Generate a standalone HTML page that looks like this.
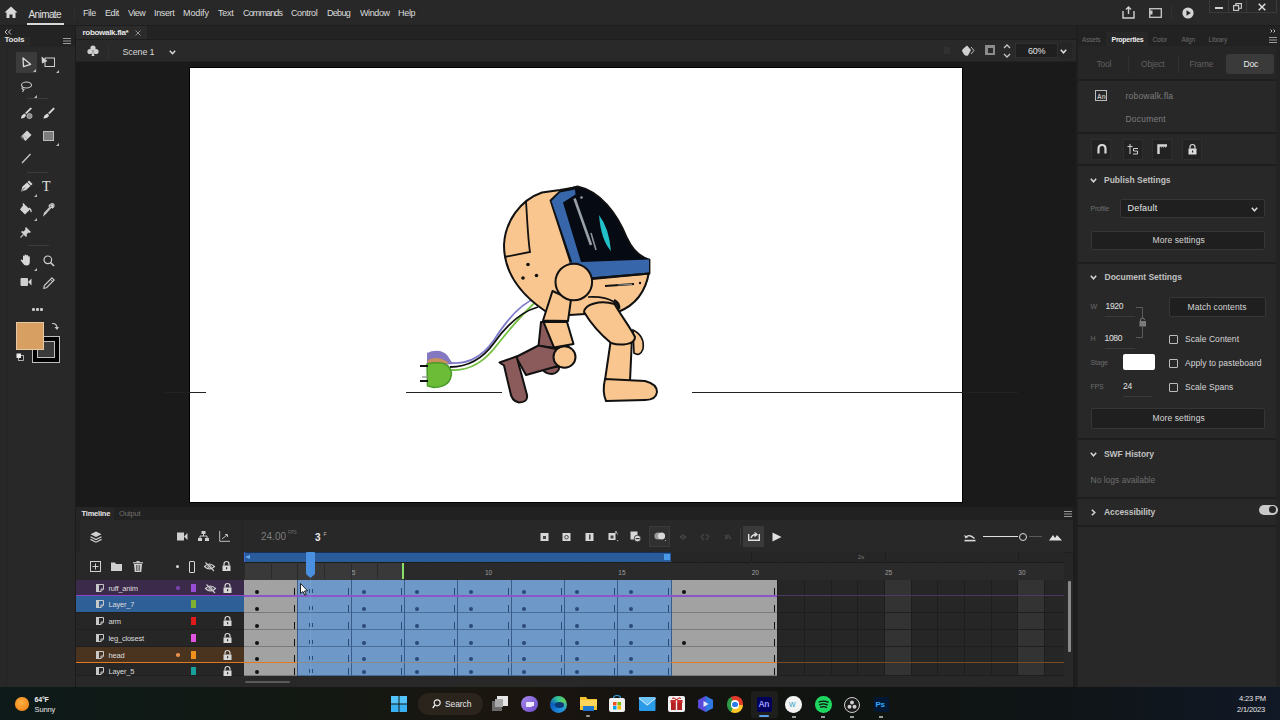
<!DOCTYPE html>
<html><head><meta charset="utf-8">
<style>
*{box-sizing:border-box;margin:0;padding:0}
html,body{width:1280px;height:720px;overflow:hidden;background:#1d1d1d;font-family:"Liberation Sans",sans-serif;color:#cfcfcf}
.a{position:absolute}
.t{position:absolute;white-space:nowrap;line-height:1}
svg{position:absolute;overflow:visible}
#menubar{left:0;top:0;width:1280px;height:26px;background:#282828}
.mm{top:8.7px;font-size:9px;color:#dcdcdc}
#tools{left:0;top:26px;width:76px;height:661px;background:#282828}
#tabrow{left:76px;top:26px;width:1000px;height:13px;background:#232323}
#scenebar{left:76px;top:39px;width:1000px;height:23px;background:#292929}
#paste{left:76px;top:62px;width:1000px;height:443px;background:#1a1a1a;overflow:hidden}
#stage{left:112.5px;top:5px;width:774.5px;height:436px;background:#fff;border:1px solid #000}
#timeline{left:76px;top:505px;width:1000px;height:182px;background:#262626;overflow:hidden}
#props{left:1076px;top:26px;width:204px;height:661px;background:#282828}
#taskbar{left:0;top:687px;width:1280px;height:33px;background:#111a1c}
</style></head><body>
<!-- MENUBAR -->
<div id="menubar" class="a">
  <div class="a" style="left:0;top:25px;width:1280px;height:1px;background:#1d1d1d"></div>
  <svg class="a" style="left:4px;top:6px" width="14" height="13" viewBox="0 0 14 13"><path d="M7 0.5 L13.5 6.5 L11.5 6.5 L11.5 12 L8.5 12 L8.5 8.5 L5.5 8.5 L5.5 12 L2.5 12 L2.5 6.5 L0.5 6.5 Z" fill="#d8d8d8"/></svg>
  <div class="t" style="left:28.5px;top:9.5px;font-size:10px;color:#e0e0e0;letter-spacing:-0.6px">Animate</div>
  <div class="a" style="left:27px;top:23px;width:37px;height:2px;background:#d8d8d8"></div>
  <div class="a" style="left:74px;top:6px;width:1px;height:14px;background:#2f2f2f"></div>
  <div class="t mm" style="left:83px;letter-spacing:-0.44px">File</div>
  <div class="t mm" style="left:105px;letter-spacing:-0.41px">Edit</div>
  <div class="t mm" style="left:128px;letter-spacing:-0.52px">View</div>
  <div class="t mm" style="left:154px;letter-spacing:-0.36px">Insert</div>
  <div class="t mm" style="left:183px;letter-spacing:-0.1px">Modify</div>
  <div class="t mm" style="left:218px;letter-spacing:-0.27px">Text</div>
  <div class="t mm" style="left:243px;letter-spacing:-0.87px">Commands</div>
  <div class="t mm" style="left:291px;letter-spacing:-0.39px">Control</div>
  <div class="t mm" style="left:327px;letter-spacing:-0.71px">Debug</div>
  <div class="t mm" style="left:360px;letter-spacing:-0.4px">Window</div>
  <div class="t mm" style="left:398px;letter-spacing:-0.31px">Help</div>
  <div class="a" style="left:422px;top:6px;width:1px;height:14px;background:#2c2c2c"></div>
  <!-- share -->
  <svg class="a" style="left:1122px;top:6px" width="13" height="13" viewBox="0 0 13 13"><path d="M1 5 V12 H12 V5" fill="none" stroke="#d0d0d0" stroke-width="1.4"/><path d="M6.5 1 V8 M4 3.5 L6.5 1 L9 3.5" fill="none" stroke="#d0d0d0" stroke-width="1.4"/></svg>
  <svg class="a" style="left:1149px;top:8px" width="13" height="10" viewBox="0 0 13 10"><rect x="0.7" y="0.7" width="11.6" height="8.6" fill="none" stroke="#c8c8c8" stroke-width="1.3"/><rect x="1" y="2.5" width="2.5" height="4" fill="#c8c8c8"/></svg>
  <div class="a" style="left:1171px;top:5px;width:1px;height:16px;background:#303030"></div>
  <svg class="a" style="left:1182px;top:7px" width="12" height="12" viewBox="0 0 12 12"><circle cx="6" cy="6" r="5.6" fill="#d4d4d4"/><path d="M4.5 3.2 L8.8 6 L4.5 8.8Z" fill="#262626"/></svg>
  <div class="a" style="left:1209px;top:-1px;width:68px;height:14px;border:1px solid #3a3a3a"></div>
  <div class="a" style="left:1228px;top:0;width:1px;height:12px;background:#3a3a3a"></div>
  <div class="a" style="left:1246px;top:0;width:1px;height:12px;background:#3a3a3a"></div>
  <div class="a" style="left:1215px;top:7px;width:8px;height:2px;background:#d0d0d0"></div>
  <svg class="a" style="left:1232.5px;top:3px" width="9" height="8" viewBox="0 0 9 8"><rect x="0.6" y="2.6" width="5" height="4.8" fill="none" stroke="#d0d0d0" stroke-width="1.1"/><path d="M2.8 2.6 V0.6 H8.4 V5.2 H5.6" fill="none" stroke="#d0d0d0" stroke-width="1.1"/></svg>
  <svg class="a" style="left:1258px;top:2.5px" width="8" height="8" viewBox="0 0 8 8"><path d="M0.7 0.7 L7.3 7.3 M7.3 0.7 L0.7 7.3" stroke="#e0e0e0" stroke-width="1.4"/></svg>
</div>
<div id="tools" class="a">
  <div class="a" style="left:0;top:0;width:76px;height:11px;background:#232323"></div>
  <svg style="left:4px;top:3px" width="8" height="6" viewBox="0 0 8 6"><path d="M3.5 0.5 L1 3 L3.5 5.5 M7 0.5 L4.5 3 L7 5.5" fill="none" stroke="#c8c8c8" stroke-width="1"/></svg>
  <div class="t" style="left:4.5px;top:10px;font-size:8px;font-weight:bold;color:#e0e0e0;letter-spacing:-0.2px">Tools</div>
  <div class="a" style="left:30px;top:9px;width:45px;height:11px;background:#232323"></div>
  <svg style="left:63px;top:12px" width="8" height="6" viewBox="0 0 8 6"><path d="M0 0.5 H8 M0 3 H8 M0 5.5 H8" stroke="#9a9a9a" stroke-width="1"/></svg>
  <div class="a" style="left:0;top:20px;width:76px;height:1px;background:#242424"></div>
  <div class="a" style="left:6px;top:21px;width:1px;height:640px;background:#232323"></div>
  <div class="a" style="left:74.5px;top:0;width:1.5px;height:661px;background:#1c1c1c"></div>
  <!-- selected box -->
  <div class="a" style="left:16px;top:26px;width:21px;height:21px;background:#3b3b3b;border-radius:1px"></div>
  <!-- select arrow -->
  <svg style="left:22px;top:31px" width="10" height="11" viewBox="0 0 10 11"><path d="M1 1 L8.6 7.3 L1.5 9.7 Z" fill="none" stroke="#dcdcdc" stroke-width="1.3" stroke-linejoin="round"/></svg>
  <svg style="left:32.5px;top:42.5px" width="3" height="3" viewBox="0 0 3 3"><path d="M3 0 V3 H0Z" fill="#bbb"/></svg>
  <!-- subselect -->
  <svg style="left:41px;top:30px" width="15" height="12" viewBox="0 0 15 12"><path d="M0.5 0.5 L6.5 5 L1 7.5 Z" fill="#d0d0d0"/><rect x="4" y="2" width="9.5" height="8.5" fill="none" stroke="#d0d0d0" stroke-width="1" /></svg>
  <svg style="left:55.5px;top:43.5px" width="3" height="3" viewBox="0 0 3 3"><path d="M3 0 V3 H0Z" fill="#bbb"/></svg>
  <!-- lasso -->
  <svg style="left:19px;top:55px" width="14" height="12" viewBox="0 0 14 12"><ellipse cx="7.5" cy="4" rx="5" ry="3" fill="none" stroke="#c8c8c8" stroke-width="1.1"/><path d="M3.5 6 Q2 8 5 8.5 Q4 10 3.5 11" fill="none" stroke="#c8c8c8" stroke-width="1.1"/></svg>
  <svg style="left:33.5px;top:68.5px" width="3" height="3" viewBox="0 0 3 3"><path d="M3 0 V3 H0Z" fill="#bbb"/></svg>
  <div class="a" style="left:27px;top:72px;width:21px;height:1px;background:#3c3c3c"></div>
  <!-- brush 1 -->
  <svg style="left:20px;top:81px" width="13" height="12" viewBox="0 0 13 12"><path d="M10.5 0.5 L12 1.5 L6.5 7 L5 6 Z" fill="#d8d8d8"/><path d="M1 11.5 Q1 8 4.5 6.5 L6 8 Q5 11.5 1 11.5Z" fill="#d8d8d8"/><circle cx="9.5" cy="9" r="2.6" fill="#8a8a8a" stroke="#b8b8b8" stroke-width="0.8"/></svg>
  <!-- brush 2 -->
  <svg style="left:43px;top:81px" width="12" height="12" viewBox="0 0 12 12"><path d="M10.5 0.5 L11.8 1.8 L6.5 7.2 L5 6 Z" fill="#d8d8d8"/><path d="M0.5 11.5 Q0.5 8 4.5 6.5 L6 8.2 Q5 11.5 0.5 11.5Z" fill="#d8d8d8"/></svg>
  <!-- eraser -->
  <svg style="left:20px;top:104px" width="12" height="12" viewBox="0 0 12 12"><path d="M7 0.5 L11.5 5 L5.5 11 L1 6.5 Z" fill="#d4d4d4"/><path d="M1 6.5 L3.5 9 " stroke="#6a6a6a" stroke-width="2"/><path d="M3 4.5 L7.5 9" stroke="#9a9a9a" stroke-width="0.7"/></svg>
  <!-- rectangle -->
  <div class="a" style="left:43px;top:105px;width:11px;height:10px;background:#7c7c7c;border:1px solid #bdbdbd"></div>
  <svg style="left:55.5px;top:116.5px" width="3" height="3" viewBox="0 0 3 3"><path d="M3 0 V3 H0Z" fill="#bbb"/></svg>
  <!-- line -->
  <svg style="left:21px;top:127px" width="10" height="11" viewBox="0 0 10 11"><path d="M1 10 L9.5 1" stroke="#c4c4c4" stroke-width="1.4"/></svg>
  <div class="a" style="left:27px;top:146px;width:21px;height:1px;background:#3c3c3c"></div>
  <!-- pen -->
  <svg style="left:20px;top:154px" width="13" height="12" viewBox="0 0 13 12"><path d="M9 0.5 L12.5 4 L11 5.5 L7.5 2 Z" fill="#d8d8d8"/><path d="M7 2.5 L10.5 6 L6 10 L1 11.5 L2.5 6.5 Z" fill="#d8d8d8"/><path d="M1.5 11 L5 7.5" stroke="#282828" stroke-width="0.8"/></svg>
  <svg style="left:33.5px;top:167.5px" width="3" height="3" viewBox="0 0 3 3"><path d="M3 0 V3 H0Z" fill="#bbb"/></svg>
  <!-- text T -->
  <div class="t" style="left:42px;top:154px;font-family:'Liberation Serif',serif;font-size:14px;color:#e0e0e0">T</div>
  <!-- paint bucket -->
  <svg style="left:19px;top:177px" width="14" height="13" viewBox="0 0 14 13"><path d="M5 1 L11 6.5 L6 11.5 L1 6.5 Z" fill="#d4d4d4"/><path d="M10 5 Q12.5 6.5 12 9" fill="none" stroke="#cfcfcf" stroke-width="1.3"/><path d="M4 0.5 L5 2" stroke="#d4d4d4" stroke-width="1.5"/></svg>
  <svg style="left:33.5px;top:191.5px" width="3" height="3" viewBox="0 0 3 3"><path d="M3 0 V3 H0Z" fill="#bbb"/></svg>
  <!-- eyedropper -->
  <svg style="left:43px;top:177px" width="12" height="13" viewBox="0 0 12 13"><path d="M8 1 Q10.5 0 11 2 Q11.5 4 9.5 5 L8.5 4 L3 10 L1 12 L1.5 10 L7 4 L6 3 Q7 1 8 1Z" fill="none" stroke="#d0d0d0" stroke-width="1.1"/><path d="M8 1.5 Q10 1 10.6 2.2 Q11 4 9.5 4.6 L7 2.5Z" fill="#d0d0d0"/></svg>
  <!-- pin -->
  <svg style="left:20px;top:200px" width="12" height="12" viewBox="0 0 12 12"><path d="M6 1 L11 6 L9.5 7 L8.5 6.5 L6.5 8.5 L7 10 L6 11 L1 6 L2 5 L3.5 5.5 L5.5 3.5 L5 2.5 Z" fill="#d0d0d0"/><path d="M3.5 8.5 L0.5 11.5" stroke="#bbb" stroke-width="1.2"/></svg>
  <div class="a" style="left:28px;top:219px;width:21px;height:1px;background:#3c3c3c"></div>
  <!-- hand -->
  <svg style="left:20px;top:228px" width="12" height="12" viewBox="0 0 12 12"><path d="M3 6 V2.5 Q3 1.5 3.8 1.5 Q4.6 1.5 4.6 2.5 V1.5 Q4.6 0.5 5.5 0.5 Q6.4 0.5 6.4 1.5 V2 Q6.4 1 7.3 1 Q8.2 1 8.2 2 V3 Q8.2 2.2 9 2.2 Q9.8 2.2 9.8 3 V8 Q9.8 11.5 6.5 11.5 Q4 11.5 3 9.5 L0.8 6.5 Q0.5 5.5 1.5 5.5 Q2.2 5.5 3 6.5Z" fill="#d8d8d8"/></svg>
  <svg style="left:33.5px;top:241.5px" width="3" height="3" viewBox="0 0 3 3"><path d="M3 0 V3 H0Z" fill="#bbb"/></svg>
  <!-- zoom -->
  <svg style="left:43px;top:229px" width="12" height="12" viewBox="0 0 12 12"><circle cx="4.8" cy="4.8" r="3.8" fill="none" stroke="#d0d0d0" stroke-width="1.2"/><path d="M7.5 7.5 L11 11" stroke="#d0d0d0" stroke-width="1.6"/></svg>
  <!-- camera -->
  <svg style="left:20px;top:251px" width="12" height="10" viewBox="0 0 12 10"><rect x="0.5" y="1" width="7.5" height="8" rx="1" fill="#d0d0d0"/><path d="M8 5 L11.5 1.5 V8.5 Z" fill="#d0d0d0"/></svg>
  <!-- pencil -->
  <svg style="left:43px;top:251px" width="12" height="12" viewBox="0 0 12 12"><path d="M9 0.8 L11.2 3 L3.5 10.7 L0.8 11.2 L1.3 8.5 Z" fill="none" stroke="#d0d0d0" stroke-width="1.1"/><path d="M7.5 2.3 L9.7 4.5" stroke="#d0d0d0" stroke-width="1"/></svg>
  <!-- dots -->
  <div class="a" style="left:32px;top:282px;width:3px;height:3px;background:#c8c8c8;border-radius:1px"></div>
  <div class="a" style="left:36px;top:282px;width:3px;height:3px;background:#c8c8c8;border-radius:1px"></div>
  <div class="a" style="left:40px;top:282px;width:3px;height:3px;background:#c8c8c8;border-radius:1px"></div>
  <!-- swap arrow -->
  <svg style="left:51px;top:296px" width="8" height="9" viewBox="0 0 8 9"><path d="M1 1.5 Q5.5 1 6 5.5" fill="none" stroke="#c8c8c8" stroke-width="1.1"/><path d="M3.5 5 L6 8 L8 5" fill="#c8c8c8"/></svg>
  <!-- stroke swatch -->
  <div class="a" style="left:32px;top:310px;width:28px;height:27px;border:1px solid #bdbdbd;background:#000"></div>
  <div class="a" style="left:37px;top:315px;width:18px;height:17px;border:1px solid #bdbdbd;background:#3a3a3a"></div>
  <!-- fill swatch -->
  <div class="a" style="left:16px;top:296px;width:28px;height:28px;border:1px solid #e6c9a4;background:#d89f62"></div>
  <!-- default colors -->
  <svg style="left:16px;top:327px" width="8" height="8" viewBox="0 0 8 8"><rect x="2.5" y="2.5" width="5" height="5" fill="#222" stroke="#ccc" stroke-width="0.8"/><rect x="0.5" y="0.5" width="4.5" height="4.5" fill="#eee"/></svg>
</div>
<div id="tabrow" class="a">
  <div class="a" style="left:0;top:0;width:71px;height:14px;background:#2b2b2b"></div>
  <div class="t" style="left:6.5px;top:3px;font-size:8px;font-weight:bold;color:#e6e6e6;letter-spacing:-0.3px">robowalk.fla*</div>
  <svg style="left:59px;top:4px" width="6" height="6" viewBox="0 0 6 6"><path d="M0.5 0.5 L5.5 5.5 M5.5 0.5 L0.5 5.5" stroke="#9a9a9a" stroke-width="0.9"/></svg>
</div>
<div id="scenebar" class="a">
  <div class="a" style="left:0;top:0;width:1000px;height:1px;background:#1d1d1d"></div>
  <div class="a" style="left:0;top:22px;width:1000px;height:1px;background:#222"></div>
  <svg style="left:11px;top:6px" width="12" height="12" viewBox="0 0 12 12"><circle cx="6" cy="3" r="2.6" fill="#cfcfcf"/><circle cx="3" cy="6.5" r="2.6" fill="#cfcfcf"/><circle cx="9" cy="6.5" r="2.6" fill="#cfcfcf"/><path d="M6 5 L7.5 11 H4.5Z" fill="#cfcfcf"/></svg>
  <div class="a" style="left:32px;top:4px;width:1px;height:16px;background:#303030"></div>
  <div class="t" style="left:46.5px;top:9px;font-size:9px;color:#d6d6d6;letter-spacing:-0.15px">Scene 1</div>
  <svg style="left:93px;top:11px" width="7" height="5" viewBox="0 0 7 5"><path d="M0.8 0.8 L3.5 3.8 L6.2 0.8" fill="none" stroke="#dcdcdc" stroke-width="1.4"/></svg>
  <!-- right icons -->
  <svg style="left:868px;top:8px" width="6" height="7" viewBox="0 0 6 7"><path d="M1 0 V7 M3 0 V7 M5 0 V7" stroke="#3a3a3a" stroke-width="1"/></svg>
  <svg style="left:885px;top:5px" width="14" height="13" viewBox="0 0 14 13"><path d="M3 4 L6 1.5 L10 6 L7 11.5 Q5 12.5 3 10.5 L1 7 Q1 5.5 3 4Z" fill="#d0d0d0"/><path d="M10 3 L13 6.5 L10 10" fill="none" stroke="#bdbdbd" stroke-width="1"/></svg>
  <div class="a" style="left:909px;top:6px;width:10px;height:10px;background:#8c8c8c"></div>
  <div class="a" style="left:911.5px;top:8.5px;width:5px;height:5px;background:#2a2a2a"></div>
  <svg style="left:927px;top:4px" width="8" height="16" viewBox="0 0 8 16"><path d="M1 5 L4 2 L7 5 M1 11 L4 14 L7 11" fill="none" stroke="#c8c8c8" stroke-width="1.3"/></svg>
  <div class="a" style="left:939px;top:4px;width:43px;height:15px;background:#1f1f1f;border:1px solid #303030"></div>
  <div class="t" style="left:952px;top:8px;font-size:9px;color:#e0e0e0;letter-spacing:-0.3px">60%</div>
  <div class="a" style="left:982px;top:4px;width:14px;height:15px;background:#252525"></div>
  <svg style="left:984px;top:10px" width="7" height="5" viewBox="0 0 7 5"><path d="M0.8 0.8 L3.5 3.8 L6.2 0.8" fill="none" stroke="#e0e0e0" stroke-width="1.5"/></svg>
</div>
<div id="paste" class="a">
  <div id="stage" class="a"></div>
  <svg style="left:0;top:0" width="1000" height="443" viewBox="76 62 1000 443">
    <!-- ground lines -->
    <path d="M165 392.5 H206 M406 392.5 H502 M692 392.5 H1018" stroke="#222" stroke-width="1"/>
    <!-- cable -->
    <path d="M536 298 C522 303, 508 318, 494 340 C480 360, 465 364, 450 363" fill="none" stroke="#7f7ccc" stroke-width="1.8"/>
    <path d="M541 297 C526 310, 512 326, 497 345 C482 365, 466 371, 451 370" fill="none" stroke="#74c040" stroke-width="1.8"/>
    <path d="M538 307 C520 312, 506 326, 494 343 C481 361, 466 367, 450 367" fill="none" stroke="#111" stroke-width="1.8"/>
    <!-- plug -->
    <path d="M427 353 Q433 350 440 351 Q447 353 449 358 L453 364 L427 366Z" fill="#8478c0"/>
    <path d="M428 360 Q438 355 449 363 L427 367Z" fill="#c8905c"/>
    <path d="M427 364 Q449 359 451.5 373 Q451 387 434 387.5 L427.5 386 Z" fill="#6cbc38" stroke="#4a9a28" stroke-width="1.5"/>
    <path d="M420 366 H428 M420 381 H428" stroke="#111" stroke-width="1.8"/>
    <path d="M422 377 H428" stroke="#8a8a8a" stroke-width="1.2"/>
    <!-- back leg (brown) -->
    <path d="M541 322 L556 322 L557 348 L538.5 346 Z" fill="#8b5a5b" stroke="#111" stroke-width="2" stroke-linejoin="round"/>
    <path d="M542 368.5 L559.5 366.5 Q559 373 552 374 Q545 374 542 368.5 Z" fill="#8b5a5b" stroke="#111" stroke-width="1.8"/>
    <path d="M516 357 L538.5 345.5 L556 349 L558 366 L526 375 Z" fill="#8b5a5b" stroke="#111" stroke-width="2" stroke-linejoin="round"/>
    <path d="M499.5 362.5 L516.5 356.5 Q522 376 527 395 Q528 402.5 519 402.5 Q511.5 401.5 510 391 L504 365.5 Z" fill="#8b5a5b" stroke="#111" stroke-width="2" stroke-linejoin="round"/>
    <!-- head -->
    <path d="M578 187 L560 190 L542 192.5 C520 200, 505 222, 504 245 C504 270, 518 295, 553 316 L618 312 C636 305, 646 290, 649 272 L649 263 L605 240 Z" fill="#f9c690" stroke="#111" stroke-width="2"/>
    <path d="M526 201.5 C527 215, 528 240, 530 252 L504.5 257" fill="none" stroke="#111" stroke-width="1.8"/>
    <circle cx="528" cy="264.5" r="1.8" fill="#111"/><circle cx="523" cy="278" r="1.8" fill="#111"/><circle cx="536.5" cy="275.5" r="1.8" fill="#111"/>
    <path d="M605 286 L634 284" stroke="#111" stroke-width="2.2"/><path d="M618 285 L632 284.3" stroke="#888" stroke-width="1.2"/><circle cx="640" cy="283" r="1.2" fill="#111"/>
    <!-- monitor -->
    <path d="M550.5 200.5 L560.5 191 L577.5 186.3 C600 191, 617 213, 627 238 C633 251, 640 257, 649.5 259.5 L649.5 273.5 L592 279 L571 264 Z" fill="#060a12" stroke="#111" stroke-width="1.8" stroke-linejoin="round"/>
    <path d="M551.5 201 L560 192.5 L575 189.5 L575.5 194.5 L563 202.5 L581 262 L572.5 263 Z" fill="#3767aa"/>
    <path d="M568 262.5 L649 259.5 L649 272.5 L591 277.5 Z" fill="#3767aa"/>
    <path d="M590 278.5 L649.5 273.5" stroke="#111" stroke-width="1.8"/>
    <path d="M574.5 198.5 L591 245" stroke="#98a0a8" stroke-width="2.6"/><path d="M591 233 L596 250" stroke="#8a929a" stroke-width="1.6"/>
    <circle cx="581.5" cy="197.5" r="1.3" fill="#98a0a8"/>
    <path d="M599 215 Q609 228 611 251 Q601 240 599 215Z" fill="#22c0c8"/>
    <!-- arm going right over head -->
    <path d="M588 297 Q605 296 614 302 Q620 306 618 312" fill="none" stroke="#111" stroke-width="1.6"/>
    <path d="M614 300 Q620 303 619 309" fill="none" stroke="#111" stroke-width="2.5"/>
    <!-- front leg (tan) -->
    <path d="M633 330 Q645 336 643 349 Q640 357 634 353 Z" fill="#f9c690" stroke="#111" stroke-width="1.6"/>
    <path d="M611 339 L632 338 L630 381 L605 380 Z" fill="#f9c690" stroke="#111" stroke-width="2" stroke-linejoin="round"/>
    <path d="M605 379 L645 381 Q657 384 657 392 Q656 400 645 400 L606 401 Q602 392 605 379Z" fill="#f9c690" stroke="#111" stroke-width="2" stroke-linejoin="round"/>
    <path d="M584 312 C585 304, 600 300, 614.5 304 C622 317, 630 327, 635 337 C635 345, 620 346, 611 343 C600 334, 590 322, 584 312 Z" fill="#f9c690" stroke="#111" stroke-width="2" stroke-linejoin="round"/>
    <!-- near arm -->
    <path d="M552.5 291 L571 299.5 L568 321 L543 320.5 Z" fill="#f9c690" stroke="#111" stroke-width="2" stroke-linejoin="round"/>
    <path d="M543.5 322 L567 322 L573.5 344 L554 347.5 Z" fill="#f9c690" stroke="#111" stroke-width="2" stroke-linejoin="round"/>
    <ellipse cx="564.5" cy="357" rx="11" ry="10.8" fill="#f9c690" stroke="#111" stroke-width="2"/>
    <!-- shoulder -->
    <circle cx="573.8" cy="282" r="18.3" fill="#f9c690" stroke="#111" stroke-width="2"/>
  </svg>
</div>
<div id="timeline" class="a">
<div class="a" style="left:0;top:0;width:1000px;height:15px;background:#212121"></div>
<div class="a" style="left:0;top:0;width:38px;height:15px;background:#262626"></div>
<div class="t" style="left:5.5px;top:5px;font-size:7.5px;font-weight:bold;color:#e8e8e8;letter-spacing:-0.2px">Timeline</div>
<div class="t" style="left:43px;top:5px;font-size:7.5px;color:#6e6e6e;letter-spacing:-0.2px">Output</div>
<div class="a" style="left:0;top:0;width:1000px;height:2px;background:#1a1a1a"></div>
<svg style="left:988px;top:6px" width="8" height="6" viewBox="0 0 8 6"><path d="M0 0.5 H8 M0 3 H8 M0 5.5 H8" stroke="#9a9a9a" stroke-width="1"/></svg>
<div class="a" style="left:997px;top:0;width:3px;height:182px;background:#1d1d1d"></div>
<div class="a" style="left:0;top:15px;width:997px;height:32px;background:#282828"></div>
<div class="a" style="left:0;top:47px;width:997px;height:1px;background:#1f1f1f"></div>
<div class="a" style="left:0;top:15px;width:4px;height:60px;background:#242424"></div>
<svg style="left:14px;top:26px" width="12" height="12" viewBox="0 0 12 12"><path d="M6 0.5 L11.5 3.2 L6 6 L0.5 3.2Z" fill="#d0d0d0"/><path d="M0.5 5.8 L6 8.6 L11.5 5.8" fill="none" stroke="#d0d0d0" stroke-width="1.2"/><path d="M0.5 8.4 L6 11.2 L11.5 8.4" fill="none" stroke="#d0d0d0" stroke-width="1.2"/></svg>
<svg style="left:101px;top:27px" width="11" height="9" viewBox="0 0 11 9"><rect x="0" y="0.5" width="7" height="8" fill="#cfcfcf"/><path d="M7 4.5 L10.5 1 V8Z" fill="#cfcfcf"/></svg>
<svg style="left:122px;top:26px" width="11" height="11" viewBox="0 0 11 11"><rect x="3.5" y="0" width="4" height="3" fill="#cfcfcf"/><path d="M5.5 3 V5 M2 7 V5 H9 V7" fill="none" stroke="#cfcfcf" stroke-width="1"/><rect x="0" y="7" width="4" height="3" fill="#cfcfcf"/><rect x="7" y="7" width="4" height="3" fill="#cfcfcf"/></svg>
<svg style="left:143px;top:26px" width="11" height="11" viewBox="0 0 11 11"><path d="M0.7 0 V10.3 H11" fill="none" stroke="#bdbdbd" stroke-width="1"/><path d="M3 8 L8 4 M6 3.5 H8.5 V6" fill="none" stroke="#bdbdbd" stroke-width="1"/></svg>
<div class="a" style="left:166px;top:15px;width:1px;height:32px;background:#242424"></div>
<div class="t" style="left:185px;top:27px;font-size:10px;color:#7c7c7c;letter-spacing:0px">24.00</div>
<div class="t" style="left:212px;top:26px;font-size:4.5px;color:#6c6c6c">FPS</div>
<div class="t" style="left:239px;top:27.5px;font-size:10px;font-weight:bold;color:#eaeaea">3</div>
<div class="t" style="left:247.5px;top:26.5px;font-size:5px;color:#bdbdbd">F</div>
<svg style="left:463.5px;top:26.5px" width="10" height="10" viewBox="0 0 10 10"><rect x="0.5" y="1" width="8" height="8" fill="#d8d8d8"/><rect x="3" y="4" width="3" height="3" fill="#444"/></svg>
<svg style="left:486px;top:26.5px" width="10" height="10" viewBox="0 0 10 10"><rect x="0.5" y="1" width="8" height="8" fill="#d8d8d8"/><circle cx="4.5" cy="5.2" r="1.8" fill="none" stroke="#444" stroke-width="1"/></svg>
<svg style="left:509px;top:26.5px" width="10" height="10" viewBox="0 0 10 10"><rect x="0.5" y="1" width="8" height="8" fill="#d8d8d8"/><rect x="4" y="2.5" width="1.5" height="5" fill="#444"/></svg>
<svg style="left:532px;top:25.5px" width="11" height="11" viewBox="0 0 11 11"><rect x="0.5" y="2" width="7" height="7" fill="#d8d8d8"/><rect x="2.5" y="4.5" width="3" height="3" fill="#444"/><path d="M6.5 3.5 L8 0 L9.5 3.5" fill="none" stroke="#ccc" stroke-width="0.8"/><rect x="9" y="9" width="1.2" height="1.2" fill="#aaa"/></svg>
<svg style="left:554px;top:26px" width="12" height="12" viewBox="0 0 12 12"><rect x="0.5" y="0.5" width="7" height="8" fill="#d8d8d8"/><circle cx="7.5" cy="7.5" r="3.3" fill="#d8d8d8" stroke="#282828" stroke-width="0.8"/><rect x="5.6" y="7" width="4" height="1.2" fill="#333"/></svg>
<div class="a" style="left:573px;top:21px;width:21px;height:21px;background:#303030;border:1px solid #3a3a3a"></div>
<svg style="left:578px;top:26px" width="12" height="11" viewBox="0 0 12 11"><circle cx="4" cy="5" r="3.6" fill="#9a9a9a"/><circle cx="7.5" cy="5" r="3.6" fill="#d8d8d8"/><rect x="11" y="9" width="1" height="1" fill="#aaa"/></svg>
<svg style="left:602px;top:26.5px" width="10" height="10" viewBox="0 0 10 10"><path d="M2 6 L5 3 L8 6 M2 4 L5 7 L8 4" fill="none" stroke="#444" stroke-width="1.3"/></svg>
<svg style="left:624px;top:26.5px" width="10" height="10" viewBox="0 0 10 10"><path d="M1 5 L4 2 M1 5 L4 8 M9 5 L6 2 M9 5 L6 8" fill="none" stroke="#444" stroke-width="1.3"/></svg>
<svg style="left:647px;top:26.5px" width="10" height="10" viewBox="0 0 10 10"><path d="M2 7 L5 3 L8 7 M2 3 L5 7" fill="none" stroke="#444" stroke-width="1.3"/></svg>
<div class="a" style="left:664px;top:23px;width:1px;height:17px;background:#363636"></div>
<div class="a" style="left:667px;top:21px;width:21px;height:21px;background:#3a3a3a"></div>
<svg style="left:671.5px;top:26px" width="12" height="11" viewBox="0 0 12 11"><path d="M0.7 3 V9.3 H11.3 V3" fill="none" stroke="#e0e0e0" stroke-width="1.4"/><path d="M3 7 Q4 3.5 8 3.5 M6.5 1.5 L9 3.5 L6.5 5.5" fill="none" stroke="#e0e0e0" stroke-width="1.3"/></svg>
<svg style="left:696px;top:27px" width="10" height="10" viewBox="0 0 10 10"><path d="M0.5 0.5 L9.5 5 L0.5 9.5Z" fill="#e0e0e0"/></svg>
<svg style="left:887.5px;top:28px" width="12" height="9" viewBox="0 0 12 9"><path d="M1.5 4.5 Q5 0.5 10.5 5.5" fill="none" stroke="#d8d8d8" stroke-width="1.3"/><path d="M0 2 L1.5 5.5 L4.5 4" fill="#d8d8d8"/><rect x="0.5" y="6.8" width="11" height="1.6" fill="#d8d8d8"/></svg>
<div class="a" style="left:906.5px;top:31px;width:35px;height:1.2px;background:#e0e0e0"></div>
<div class="a" style="left:953px;top:31px;width:13px;height:1px;background:#5a5a5a"></div>
<div class="a" style="left:943px;top:27.5px;width:8px;height:8px;border:1.3px solid #dcdcdc;border-radius:50%;background:#262626"></div>
<svg style="left:973px;top:28.5px" width="13" height="7" viewBox="0 0 13 7"><path d="M0 6.5 L4 1 L6 4 L8 1 L13 6.5Z" fill="#e0e0e0"/></svg>
<div class="a" style="left:0;top:47px;width:168px;height:28px;background:#282828"></div>
<svg style="left:14px;top:56px" width="11" height="11" viewBox="0 0 11 11"><rect x="0.5" y="0.5" width="10" height="10" fill="none" stroke="#cfcfcf" stroke-width="1"/><path d="M5.5 2.5 V8.5 M2.5 5.5 H8.5" stroke="#cfcfcf" stroke-width="1"/></svg>
<svg style="left:35px;top:57px" width="11" height="9" viewBox="0 0 11 9"><path d="M0 0.5 H4 L5 2 H11 V9 H0Z" fill="#d0d0d0"/></svg>
<svg style="left:56.5px;top:55.5px" width="10" height="11" viewBox="0 0 10 11"><rect x="0" y="1.2" width="10" height="1.2" fill="#d0d0d0"/><rect x="3.5" y="0" width="3" height="1.5" fill="#d0d0d0"/><path d="M1 3 H9 L8.3 11 H1.7Z" fill="#d0d0d0"/><path d="M3.5 4 V10 M5 4 V10 M6.5 4 V10" stroke="#282828" stroke-width="0.6"/></svg>
<div class="a" style="left:100px;top:60px;width:3px;height:3px;background:#d8d8d8;border-radius:50%"></div>
<div class="a" style="left:113px;top:55.5px;width:6px;height:12px;border:1.2px solid #d8d8d8;border-radius:1px"></div>
<svg style="left:128px;top:57px" width="11" height="10" viewBox="0 0 11 10"><path d="M0.5 4.5 Q5.5 -0.5 10.5 4.5 Q5.5 9.5 0.5 4.5Z" fill="none" stroke="#d0d0d0" stroke-width="1.1"/><circle cx="5.5" cy="4.5" r="1.6" fill="none" stroke="#d0d0d0" stroke-width="1"/><path d="M1.5 0.5 L10 9" stroke="#d0d0d0" stroke-width="1.1"/></svg>
<svg style="left:146px;top:56px" width="9" height="11" viewBox="0 0 9 11"><path d="M2 4.5 V3 Q2 0.5 4.5 0.5 Q7 0.5 7 3 V4.5" fill="none" stroke="#d8d8d8" stroke-width="1.2"/><rect x="0.5" y="4.5" width="8" height="5.5" fill="#d8d8d8"/><rect x="4" y="6.2" width="1.2" height="2" fill="#282828"/></svg>
<div class="a" style="left:168px;top:47px;width:820px;height:28px;background:#262626"></div>
<div class="a" style="left:168px;top:47px;width:426.5px;height:10px;background:#17305a"></div>
<div class="a" style="left:168px;top:48px;width:426.5px;height:8.5px;background:#2a5c9c"></div>
<div class="a" style="left:168px;top:47px;width:1px;height:28px;background:#3a6ad8"></div>
<svg style="left:169px;top:50px" width="5" height="4" viewBox="0 0 5 4"><path d="M0 2 L5 0 V4Z" fill="#62a8f0"/></svg>
<div class="a" style="left:588px;top:49px;width:6px;height:6px;background:#4a9ae8"></div>
<div class="a" style="left:594.5px;top:57px;width:1px;height:0px;background:#1a1a1a"></div>
<div class="a" style="left:168px;top:57px;width:158.5px;height:17.5px;background:#393939"></div>
<div class="a" style="left:326.5px;top:57px;width:661.5px;height:17.5px;background:#2a2a2a"></div>
<div class="a" style="left:168px;top:56.5px;width:820px;height:1px;background:#1c1c1c"></div>
<div class="a" style="left:168.0px;top:57px;width:1px;height:17px;background:#2a2a2a"></div>
<div class="a" style="left:194.7px;top:57px;width:1px;height:17px;background:#2a2a2a"></div>
<div class="a" style="left:221.3px;top:57px;width:1px;height:17px;background:#2a2a2a"></div>
<div class="a" style="left:248.0px;top:57px;width:1px;height:17px;background:#2a2a2a"></div>
<div class="a" style="left:274.7px;top:57px;width:1px;height:17px;background:#2a2a2a"></div>
<div class="a" style="left:301.3px;top:57px;width:1px;height:17px;background:#2a2a2a"></div>
<div class="a" style="left:328.0px;top:57px;width:1px;height:17px;background:#2a2a2a"></div>
<div class="a" style="left:354.7px;top:57px;width:1px;height:17px;background:#2a2a2a"></div>
<div class="a" style="left:381.3px;top:57px;width:1px;height:17px;background:#2a2a2a"></div>
<div class="a" style="left:408.0px;top:57px;width:1px;height:17px;background:#2a2a2a"></div>
<div class="a" style="left:434.7px;top:57px;width:1px;height:17px;background:#2a2a2a"></div>
<div class="a" style="left:461.3px;top:57px;width:1px;height:17px;background:#2a2a2a"></div>
<div class="a" style="left:488.0px;top:57px;width:1px;height:17px;background:#2a2a2a"></div>
<div class="a" style="left:514.7px;top:57px;width:1px;height:17px;background:#2a2a2a"></div>
<div class="a" style="left:541.3px;top:57px;width:1px;height:17px;background:#2a2a2a"></div>
<div class="a" style="left:568.0px;top:57px;width:1px;height:17px;background:#2a2a2a"></div>
<div class="a" style="left:594.7px;top:57px;width:1px;height:17px;background:#2a2a2a"></div>
<div class="a" style="left:621.3px;top:57px;width:1px;height:17px;background:#2a2a2a"></div>
<div class="a" style="left:648.0px;top:57px;width:1px;height:17px;background:#2a2a2a"></div>
<div class="a" style="left:674.7px;top:57px;width:1px;height:17px;background:#2a2a2a"></div>
<div class="a" style="left:701.3px;top:57px;width:1px;height:17px;background:#2a2a2a"></div>
<div class="a" style="left:728.0px;top:57px;width:1px;height:17px;background:#2a2a2a"></div>
<div class="a" style="left:754.7px;top:57px;width:1px;height:17px;background:#2a2a2a"></div>
<div class="a" style="left:781.3px;top:57px;width:1px;height:17px;background:#2a2a2a"></div>
<div class="a" style="left:808.0px;top:57px;width:1px;height:17px;background:#2a2a2a"></div>
<div class="a" style="left:834.7px;top:57px;width:1px;height:17px;background:#2a2a2a"></div>
<div class="a" style="left:861.3px;top:57px;width:1px;height:17px;background:#2a2a2a"></div>
<div class="a" style="left:888.0px;top:57px;width:1px;height:17px;background:#2a2a2a"></div>
<div class="a" style="left:914.7px;top:57px;width:1px;height:17px;background:#2a2a2a"></div>
<div class="a" style="left:941.3px;top:57px;width:1px;height:17px;background:#2a2a2a"></div>
<div class="a" style="left:968.0px;top:57px;width:1px;height:17px;background:#2a2a2a"></div>
<div class="t" style="left:275.7px;top:65px;font-size:6.5px;color:#a0a0a0">5</div>
<div class="t" style="left:409.0px;top:65px;font-size:6.5px;color:#a0a0a0">10</div>
<div class="t" style="left:542.3px;top:65px;font-size:6.5px;color:#a0a0a0">15</div>
<div class="t" style="left:675.7px;top:65px;font-size:6.5px;color:#a0a0a0">20</div>
<div class="t" style="left:809.0px;top:65px;font-size:6.5px;color:#a0a0a0">25</div>
<div class="t" style="left:942.3px;top:65px;font-size:6.5px;color:#a0a0a0">30</div>
<div class="t" style="left:782px;top:49px;font-size:6px;color:#7a7a7a">2s</div>
<div class="a" style="left:674.8px;top:48px;width:1px;height:9px;background:#1c1c1c"></div>
<div class="a" style="left:809px;top:48px;width:1px;height:9px;background:#1c1c1c"></div>
<div class="a" style="left:942px;top:48px;width:1px;height:9px;background:#1c1c1c"></div>
<div class="a" style="left:326px;top:58px;width:1.5px;height:16px;background:#88e068"></div>
<div class="a" style="left:0;top:75px;width:168px;height:16px;background:#3c2a4a"></div>
<div class="a" style="left:0;top:90px;width:168px;height:1px;background:#1f1f1f"></div>
<svg style="left:20px;top:79px" width="8" height="8" viewBox="0 0 8 8"><path d="M0.5 0.5 H7.5 V5 L5 7.5 H0.5Z" fill="none" stroke="#c8c8c8" stroke-width="1"/><path d="M7.5 5 H5 V7.5" fill="none" stroke="#c8c8c8" stroke-width="1"/><rect x="0" y="0" width="3" height="8" fill="#c8c8c8"/></svg>
<div class="t" style="left:32.5px;top:79.5px;font-size:7.5px;color:#dcdcdc;letter-spacing:-0.2px">ruff_anim</div>
<div class="a" style="left:100px;top:81px;width:3.5px;height:3.5px;background:#7a44b0;border-radius:50%"></div>
<div class="a" style="left:114.5px;top:79px;width:5px;height:8px;background:#9a4ed8"></div>
<svg style="left:128.5px;top:78.5px" width="11" height="10" viewBox="0 0 11 10"><path d="M0.5 4.5 Q5.5 -0.5 10.5 4.5 Q5.5 9.5 0.5 4.5Z" fill="none" stroke="#cfcfcf" stroke-width="1.1"/><circle cx="5.5" cy="4.5" r="1.6" fill="none" stroke="#cfcfcf" stroke-width="1"/><path d="M1.5 0.5 L10 9" stroke="#cfcfcf" stroke-width="1.1"/></svg>
<svg style="left:146.5px;top:78px" width="9" height="11" viewBox="0 0 9 11"><path d="M2 4.5 V3 Q2 0.5 4.5 0.5 Q7 0.5 7 3 V4.5" fill="none" stroke="#d8d8d8" stroke-width="1.2"/><rect x="0.5" y="4.5" width="8" height="5.5" fill="#d8d8d8"/><rect x="4" y="6.2" width="1.2" height="2" fill="#282828"/></svg>
<div class="a" style="left:168px;top:75px;width:53.3px;height:16px;background:#a2a2a2"></div>
<div class="a" style="left:221.3px;top:75px;width:373.3px;height:16px;background:#6d98c8"></div>
<div class="a" style="left:594.7px;top:75px;width:106.7px;height:16px;background:#a2a2a2"></div>
<div class="a" style="left:701.3px;top:75px;width:286.7px;height:16px;background:#262626"></div>
<div class="a" style="left:168px;top:90px;width:53.3px;height:1px;background:#7a7a7a"></div>
<div class="a" style="left:221.3px;top:90px;width:373.3px;height:1px;background:#4a6e98"></div>
<div class="a" style="left:594.7px;top:90px;width:106.7px;height:1px;background:#7a7a7a"></div>
<div class="a" style="left:701.3px;top:90px;width:286.7px;height:1px;background:#1e1e1e"></div>
<div class="a" style="left:179.3px;top:84.5px;width:4px;height:4px;border-radius:50%;background:#111"></div>
<div class="a" style="left:218.3px;top:82.5px;width:1.2px;height:7px;background:#111"></div>
<div class="a" style="left:233.2px;top:83.5px;width:1.2px;height:4px;background:#2a4a78"></div>
<div class="a" style="left:235.5px;top:83.5px;width:1.2px;height:4px;background:#2a4a78"></div>
<div class="a" style="left:271.7px;top:82.5px;width:1.2px;height:7px;background:#2a4a78"></div>
<div class="a" style="left:221.3px;top:75px;width:1px;height:16px;background:#3a5c88"></div>
<div class="a" style="left:286.0px;top:84.5px;width:4px;height:4px;border-radius:50%;background:#2a4a78"></div>
<div class="a" style="left:325.0px;top:82.5px;width:1.2px;height:7px;background:#2a4a78"></div>
<div class="a" style="left:274.7px;top:75px;width:1px;height:16px;background:#3a5c88"></div>
<div class="a" style="left:339.3px;top:84.5px;width:4px;height:4px;border-radius:50%;background:#2a4a78"></div>
<div class="a" style="left:378.3px;top:82.5px;width:1.2px;height:7px;background:#2a4a78"></div>
<div class="a" style="left:328.0px;top:75px;width:1px;height:16px;background:#3a5c88"></div>
<div class="a" style="left:392.7px;top:84.5px;width:4px;height:4px;border-radius:50%;background:#2a4a78"></div>
<div class="a" style="left:431.7px;top:82.5px;width:1.2px;height:7px;background:#2a4a78"></div>
<div class="a" style="left:381.3px;top:75px;width:1px;height:16px;background:#3a5c88"></div>
<div class="a" style="left:446.0px;top:84.5px;width:4px;height:4px;border-radius:50%;background:#2a4a78"></div>
<div class="a" style="left:485.0px;top:82.5px;width:1.2px;height:7px;background:#2a4a78"></div>
<div class="a" style="left:434.7px;top:75px;width:1px;height:16px;background:#3a5c88"></div>
<div class="a" style="left:499.3px;top:84.5px;width:4px;height:4px;border-radius:50%;background:#2a4a78"></div>
<div class="a" style="left:538.3px;top:82.5px;width:1.2px;height:7px;background:#2a4a78"></div>
<div class="a" style="left:488.0px;top:75px;width:1px;height:16px;background:#3a5c88"></div>
<div class="a" style="left:552.7px;top:84.5px;width:4px;height:4px;border-radius:50%;background:#2a4a78"></div>
<div class="a" style="left:591.7px;top:82.5px;width:1.2px;height:7px;background:#2a4a78"></div>
<div class="a" style="left:541.3px;top:75px;width:1px;height:16px;background:#3a5c88"></div>
<div class="a" style="left:594.7px;top:75px;width:1px;height:16px;background:#3a5c88"></div>
<div class="a" style="left:606.0px;top:84.5px;width:4px;height:4px;border-radius:50%;background:#111"></div>
<div class="a" style="left:698.0px;top:82.5px;width:1.2px;height:7px;background:#111"></div>
<div class="a" style="left:701.3px;top:75px;width:1px;height:16px;background:#1e1e1e"></div>
<div class="a" style="left:728.0px;top:75px;width:1px;height:16px;background:#1e1e1e"></div>
<div class="a" style="left:754.7px;top:75px;width:1px;height:16px;background:#1e1e1e"></div>
<div class="a" style="left:781.3px;top:75px;width:1px;height:16px;background:#1e1e1e"></div>
<div class="a" style="left:808.0px;top:75px;width:1px;height:16px;background:#1e1e1e"></div>
<div class="a" style="left:834.7px;top:75px;width:1px;height:16px;background:#1e1e1e"></div>
<div class="a" style="left:861.3px;top:75px;width:1px;height:16px;background:#1e1e1e"></div>
<div class="a" style="left:888.0px;top:75px;width:1px;height:16px;background:#1e1e1e"></div>
<div class="a" style="left:914.7px;top:75px;width:1px;height:16px;background:#1e1e1e"></div>
<div class="a" style="left:941.3px;top:75px;width:1px;height:16px;background:#1e1e1e"></div>
<div class="a" style="left:968.0px;top:75px;width:1px;height:16px;background:#1e1e1e"></div>
<div class="a" style="left:809.0px;top:75px;width:25.7px;height:15px;background:#333"></div>
<div class="a" style="left:942.3px;top:75px;width:25.7px;height:15px;background:#333"></div>
<div class="a" style="left:0;top:89.5px;width:168px;height:1.5px;background:#8e44c8"></div>
<div class="a" style="left:0;top:91px;width:168px;height:17px;background:#2e5f97"></div>
<div class="a" style="left:0;top:107px;width:168px;height:1px;background:#1f1f1f"></div>
<svg style="left:20px;top:95px" width="8" height="8" viewBox="0 0 8 8"><path d="M0.5 0.5 H7.5 V5 L5 7.5 H0.5Z" fill="none" stroke="#c8c8c8" stroke-width="1"/><path d="M7.5 5 H5 V7.5" fill="none" stroke="#c8c8c8" stroke-width="1"/><rect x="0" y="0" width="3" height="8" fill="#c8c8c8"/></svg>
<div class="t" style="left:32.5px;top:95.5px;font-size:7.5px;color:#dcdcdc;letter-spacing:-0.2px">Layer_7</div>
<div class="a" style="left:114.5px;top:95px;width:5px;height:8px;background:#80b030"></div>
<div class="a" style="left:168px;top:91px;width:53.3px;height:17px;background:#a2a2a2"></div>
<div class="a" style="left:221.3px;top:91px;width:373.3px;height:17px;background:#6d98c8"></div>
<div class="a" style="left:594.7px;top:91px;width:106.7px;height:17px;background:#a2a2a2"></div>
<div class="a" style="left:701.3px;top:91px;width:286.7px;height:17px;background:#262626"></div>
<div class="a" style="left:168px;top:107px;width:53.3px;height:1px;background:#7a7a7a"></div>
<div class="a" style="left:221.3px;top:107px;width:373.3px;height:1px;background:#4a6e98"></div>
<div class="a" style="left:594.7px;top:107px;width:106.7px;height:1px;background:#7a7a7a"></div>
<div class="a" style="left:701.3px;top:107px;width:286.7px;height:1px;background:#1e1e1e"></div>
<div class="a" style="left:179.3px;top:101.5px;width:4px;height:4px;border-radius:50%;background:#111"></div>
<div class="a" style="left:218.3px;top:99.5px;width:1.2px;height:7px;background:#111"></div>
<div class="a" style="left:233.2px;top:100.5px;width:1.2px;height:4px;background:#2a4a78"></div>
<div class="a" style="left:235.5px;top:100.5px;width:1.2px;height:4px;background:#2a4a78"></div>
<div class="a" style="left:271.7px;top:99.5px;width:1.2px;height:7px;background:#2a4a78"></div>
<div class="a" style="left:221.3px;top:91px;width:1px;height:17px;background:#3a5c88"></div>
<div class="a" style="left:286.0px;top:101.5px;width:4px;height:4px;border-radius:50%;background:#2a4a78"></div>
<div class="a" style="left:325.0px;top:99.5px;width:1.2px;height:7px;background:#2a4a78"></div>
<div class="a" style="left:274.7px;top:91px;width:1px;height:17px;background:#3a5c88"></div>
<div class="a" style="left:339.3px;top:101.5px;width:4px;height:4px;border-radius:50%;background:#2a4a78"></div>
<div class="a" style="left:378.3px;top:99.5px;width:1.2px;height:7px;background:#2a4a78"></div>
<div class="a" style="left:328.0px;top:91px;width:1px;height:17px;background:#3a5c88"></div>
<div class="a" style="left:392.7px;top:101.5px;width:4px;height:4px;border-radius:50%;background:#2a4a78"></div>
<div class="a" style="left:431.7px;top:99.5px;width:1.2px;height:7px;background:#2a4a78"></div>
<div class="a" style="left:381.3px;top:91px;width:1px;height:17px;background:#3a5c88"></div>
<div class="a" style="left:446.0px;top:101.5px;width:4px;height:4px;border-radius:50%;background:#2a4a78"></div>
<div class="a" style="left:485.0px;top:99.5px;width:1.2px;height:7px;background:#2a4a78"></div>
<div class="a" style="left:434.7px;top:91px;width:1px;height:17px;background:#3a5c88"></div>
<div class="a" style="left:499.3px;top:101.5px;width:4px;height:4px;border-radius:50%;background:#2a4a78"></div>
<div class="a" style="left:538.3px;top:99.5px;width:1.2px;height:7px;background:#2a4a78"></div>
<div class="a" style="left:488.0px;top:91px;width:1px;height:17px;background:#3a5c88"></div>
<div class="a" style="left:552.7px;top:101.5px;width:4px;height:4px;border-radius:50%;background:#2a4a78"></div>
<div class="a" style="left:591.7px;top:99.5px;width:1.2px;height:7px;background:#2a4a78"></div>
<div class="a" style="left:541.3px;top:91px;width:1px;height:17px;background:#3a5c88"></div>
<div class="a" style="left:594.7px;top:91px;width:1px;height:17px;background:#3a5c88"></div>
<div class="a" style="left:698.0px;top:99.5px;width:1.2px;height:7px;background:#111"></div>
<div class="a" style="left:701.3px;top:91px;width:1px;height:17px;background:#1e1e1e"></div>
<div class="a" style="left:728.0px;top:91px;width:1px;height:17px;background:#1e1e1e"></div>
<div class="a" style="left:754.7px;top:91px;width:1px;height:17px;background:#1e1e1e"></div>
<div class="a" style="left:781.3px;top:91px;width:1px;height:17px;background:#1e1e1e"></div>
<div class="a" style="left:808.0px;top:91px;width:1px;height:17px;background:#1e1e1e"></div>
<div class="a" style="left:834.7px;top:91px;width:1px;height:17px;background:#1e1e1e"></div>
<div class="a" style="left:861.3px;top:91px;width:1px;height:17px;background:#1e1e1e"></div>
<div class="a" style="left:888.0px;top:91px;width:1px;height:17px;background:#1e1e1e"></div>
<div class="a" style="left:914.7px;top:91px;width:1px;height:17px;background:#1e1e1e"></div>
<div class="a" style="left:941.3px;top:91px;width:1px;height:17px;background:#1e1e1e"></div>
<div class="a" style="left:968.0px;top:91px;width:1px;height:17px;background:#1e1e1e"></div>
<div class="a" style="left:809.0px;top:91px;width:25.7px;height:16px;background:#333"></div>
<div class="a" style="left:942.3px;top:91px;width:25.7px;height:16px;background:#333"></div>
<div class="a" style="left:0;top:108px;width:168px;height:17px;background:#262626"></div>
<div class="a" style="left:0;top:124px;width:168px;height:1px;background:#1f1f1f"></div>
<svg style="left:20px;top:112px" width="8" height="8" viewBox="0 0 8 8"><path d="M0.5 0.5 H7.5 V5 L5 7.5 H0.5Z" fill="none" stroke="#c8c8c8" stroke-width="1"/><path d="M7.5 5 H5 V7.5" fill="none" stroke="#c8c8c8" stroke-width="1"/><rect x="0" y="0" width="3" height="8" fill="#c8c8c8"/></svg>
<div class="t" style="left:32.5px;top:112.5px;font-size:7.5px;color:#dcdcdc;letter-spacing:-0.2px">arm</div>
<div class="a" style="left:114.5px;top:112px;width:5px;height:8px;background:#e01a1a"></div>
<svg style="left:146.5px;top:111px" width="9" height="11" viewBox="0 0 9 11"><path d="M2 4.5 V3 Q2 0.5 4.5 0.5 Q7 0.5 7 3 V4.5" fill="none" stroke="#d8d8d8" stroke-width="1.2"/><rect x="0.5" y="4.5" width="8" height="5.5" fill="#d8d8d8"/><rect x="4" y="6.2" width="1.2" height="2" fill="#282828"/></svg>
<div class="a" style="left:168px;top:108px;width:53.3px;height:17px;background:#a2a2a2"></div>
<div class="a" style="left:221.3px;top:108px;width:373.3px;height:17px;background:#6d98c8"></div>
<div class="a" style="left:594.7px;top:108px;width:106.7px;height:17px;background:#a2a2a2"></div>
<div class="a" style="left:701.3px;top:108px;width:286.7px;height:17px;background:#262626"></div>
<div class="a" style="left:168px;top:124px;width:53.3px;height:1px;background:#7a7a7a"></div>
<div class="a" style="left:221.3px;top:124px;width:373.3px;height:1px;background:#4a6e98"></div>
<div class="a" style="left:594.7px;top:124px;width:106.7px;height:1px;background:#7a7a7a"></div>
<div class="a" style="left:701.3px;top:124px;width:286.7px;height:1px;background:#1e1e1e"></div>
<div class="a" style="left:179.3px;top:118.5px;width:4px;height:4px;border-radius:50%;background:#111"></div>
<div class="a" style="left:218.3px;top:116.5px;width:1.2px;height:7px;background:#111"></div>
<div class="a" style="left:233.2px;top:117.5px;width:1.2px;height:4px;background:#2a4a78"></div>
<div class="a" style="left:235.5px;top:117.5px;width:1.2px;height:4px;background:#2a4a78"></div>
<div class="a" style="left:271.7px;top:116.5px;width:1.2px;height:7px;background:#2a4a78"></div>
<div class="a" style="left:221.3px;top:108px;width:1px;height:17px;background:#3a5c88"></div>
<div class="a" style="left:286.0px;top:118.5px;width:4px;height:4px;border-radius:50%;background:#2a4a78"></div>
<div class="a" style="left:325.0px;top:116.5px;width:1.2px;height:7px;background:#2a4a78"></div>
<div class="a" style="left:274.7px;top:108px;width:1px;height:17px;background:#3a5c88"></div>
<div class="a" style="left:339.3px;top:118.5px;width:4px;height:4px;border-radius:50%;background:#2a4a78"></div>
<div class="a" style="left:378.3px;top:116.5px;width:1.2px;height:7px;background:#2a4a78"></div>
<div class="a" style="left:328.0px;top:108px;width:1px;height:17px;background:#3a5c88"></div>
<div class="a" style="left:392.7px;top:118.5px;width:4px;height:4px;border-radius:50%;background:#2a4a78"></div>
<div class="a" style="left:431.7px;top:116.5px;width:1.2px;height:7px;background:#2a4a78"></div>
<div class="a" style="left:381.3px;top:108px;width:1px;height:17px;background:#3a5c88"></div>
<div class="a" style="left:446.0px;top:118.5px;width:4px;height:4px;border-radius:50%;background:#2a4a78"></div>
<div class="a" style="left:485.0px;top:116.5px;width:1.2px;height:7px;background:#2a4a78"></div>
<div class="a" style="left:434.7px;top:108px;width:1px;height:17px;background:#3a5c88"></div>
<div class="a" style="left:499.3px;top:118.5px;width:4px;height:4px;border-radius:50%;background:#2a4a78"></div>
<div class="a" style="left:538.3px;top:116.5px;width:1.2px;height:7px;background:#2a4a78"></div>
<div class="a" style="left:488.0px;top:108px;width:1px;height:17px;background:#3a5c88"></div>
<div class="a" style="left:552.7px;top:118.5px;width:4px;height:4px;border-radius:50%;background:#2a4a78"></div>
<div class="a" style="left:591.7px;top:116.5px;width:1.2px;height:7px;background:#2a4a78"></div>
<div class="a" style="left:541.3px;top:108px;width:1px;height:17px;background:#3a5c88"></div>
<div class="a" style="left:594.7px;top:108px;width:1px;height:17px;background:#3a5c88"></div>
<div class="a" style="left:698.0px;top:116.5px;width:1.2px;height:7px;background:#111"></div>
<div class="a" style="left:701.3px;top:108px;width:1px;height:17px;background:#1e1e1e"></div>
<div class="a" style="left:728.0px;top:108px;width:1px;height:17px;background:#1e1e1e"></div>
<div class="a" style="left:754.7px;top:108px;width:1px;height:17px;background:#1e1e1e"></div>
<div class="a" style="left:781.3px;top:108px;width:1px;height:17px;background:#1e1e1e"></div>
<div class="a" style="left:808.0px;top:108px;width:1px;height:17px;background:#1e1e1e"></div>
<div class="a" style="left:834.7px;top:108px;width:1px;height:17px;background:#1e1e1e"></div>
<div class="a" style="left:861.3px;top:108px;width:1px;height:17px;background:#1e1e1e"></div>
<div class="a" style="left:888.0px;top:108px;width:1px;height:17px;background:#1e1e1e"></div>
<div class="a" style="left:914.7px;top:108px;width:1px;height:17px;background:#1e1e1e"></div>
<div class="a" style="left:941.3px;top:108px;width:1px;height:17px;background:#1e1e1e"></div>
<div class="a" style="left:968.0px;top:108px;width:1px;height:17px;background:#1e1e1e"></div>
<div class="a" style="left:809.0px;top:108px;width:25.7px;height:16px;background:#333"></div>
<div class="a" style="left:942.3px;top:108px;width:25.7px;height:16px;background:#333"></div>
<div class="a" style="left:0;top:125px;width:168px;height:17px;background:#262626"></div>
<div class="a" style="left:0;top:141px;width:168px;height:1px;background:#1f1f1f"></div>
<svg style="left:20px;top:129px" width="8" height="8" viewBox="0 0 8 8"><path d="M0.5 0.5 H7.5 V5 L5 7.5 H0.5Z" fill="none" stroke="#c8c8c8" stroke-width="1"/><path d="M7.5 5 H5 V7.5" fill="none" stroke="#c8c8c8" stroke-width="1"/><rect x="0" y="0" width="3" height="8" fill="#c8c8c8"/></svg>
<div class="t" style="left:32.5px;top:129.5px;font-size:7.5px;color:#dcdcdc;letter-spacing:-0.2px">leg_closest</div>
<div class="a" style="left:114.5px;top:129px;width:5px;height:8px;background:#e055e0"></div>
<svg style="left:146.5px;top:128px" width="9" height="11" viewBox="0 0 9 11"><path d="M2 4.5 V3 Q2 0.5 4.5 0.5 Q7 0.5 7 3 V4.5" fill="none" stroke="#d8d8d8" stroke-width="1.2"/><rect x="0.5" y="4.5" width="8" height="5.5" fill="#d8d8d8"/><rect x="4" y="6.2" width="1.2" height="2" fill="#282828"/></svg>
<div class="a" style="left:168px;top:125px;width:53.3px;height:17px;background:#a2a2a2"></div>
<div class="a" style="left:221.3px;top:125px;width:373.3px;height:17px;background:#6d98c8"></div>
<div class="a" style="left:594.7px;top:125px;width:106.7px;height:17px;background:#a2a2a2"></div>
<div class="a" style="left:701.3px;top:125px;width:286.7px;height:17px;background:#262626"></div>
<div class="a" style="left:168px;top:141px;width:53.3px;height:1px;background:#7a7a7a"></div>
<div class="a" style="left:221.3px;top:141px;width:373.3px;height:1px;background:#4a6e98"></div>
<div class="a" style="left:594.7px;top:141px;width:106.7px;height:1px;background:#7a7a7a"></div>
<div class="a" style="left:701.3px;top:141px;width:286.7px;height:1px;background:#1e1e1e"></div>
<div class="a" style="left:179.3px;top:135.5px;width:4px;height:4px;border-radius:50%;background:#111"></div>
<div class="a" style="left:218.3px;top:133.5px;width:1.2px;height:7px;background:#111"></div>
<div class="a" style="left:233.2px;top:134.5px;width:1.2px;height:4px;background:#2a4a78"></div>
<div class="a" style="left:235.5px;top:134.5px;width:1.2px;height:4px;background:#2a4a78"></div>
<div class="a" style="left:271.7px;top:133.5px;width:1.2px;height:7px;background:#2a4a78"></div>
<div class="a" style="left:221.3px;top:125px;width:1px;height:17px;background:#3a5c88"></div>
<div class="a" style="left:286.0px;top:135.5px;width:4px;height:4px;border-radius:50%;background:#2a4a78"></div>
<div class="a" style="left:325.0px;top:133.5px;width:1.2px;height:7px;background:#2a4a78"></div>
<div class="a" style="left:274.7px;top:125px;width:1px;height:17px;background:#3a5c88"></div>
<div class="a" style="left:339.3px;top:135.5px;width:4px;height:4px;border-radius:50%;background:#2a4a78"></div>
<div class="a" style="left:378.3px;top:133.5px;width:1.2px;height:7px;background:#2a4a78"></div>
<div class="a" style="left:328.0px;top:125px;width:1px;height:17px;background:#3a5c88"></div>
<div class="a" style="left:392.7px;top:135.5px;width:4px;height:4px;border-radius:50%;background:#2a4a78"></div>
<div class="a" style="left:431.7px;top:133.5px;width:1.2px;height:7px;background:#2a4a78"></div>
<div class="a" style="left:381.3px;top:125px;width:1px;height:17px;background:#3a5c88"></div>
<div class="a" style="left:446.0px;top:135.5px;width:4px;height:4px;border-radius:50%;background:#2a4a78"></div>
<div class="a" style="left:485.0px;top:133.5px;width:1.2px;height:7px;background:#2a4a78"></div>
<div class="a" style="left:434.7px;top:125px;width:1px;height:17px;background:#3a5c88"></div>
<div class="a" style="left:499.3px;top:135.5px;width:4px;height:4px;border-radius:50%;background:#2a4a78"></div>
<div class="a" style="left:538.3px;top:133.5px;width:1.2px;height:7px;background:#2a4a78"></div>
<div class="a" style="left:488.0px;top:125px;width:1px;height:17px;background:#3a5c88"></div>
<div class="a" style="left:552.7px;top:135.5px;width:4px;height:4px;border-radius:50%;background:#2a4a78"></div>
<div class="a" style="left:591.7px;top:133.5px;width:1.2px;height:7px;background:#2a4a78"></div>
<div class="a" style="left:541.3px;top:125px;width:1px;height:17px;background:#3a5c88"></div>
<div class="a" style="left:594.7px;top:125px;width:1px;height:17px;background:#3a5c88"></div>
<div class="a" style="left:606.0px;top:135.5px;width:4px;height:4px;border-radius:50%;background:#111"></div>
<div class="a" style="left:698.0px;top:133.5px;width:1.2px;height:7px;background:#111"></div>
<div class="a" style="left:701.3px;top:125px;width:1px;height:17px;background:#1e1e1e"></div>
<div class="a" style="left:728.0px;top:125px;width:1px;height:17px;background:#1e1e1e"></div>
<div class="a" style="left:754.7px;top:125px;width:1px;height:17px;background:#1e1e1e"></div>
<div class="a" style="left:781.3px;top:125px;width:1px;height:17px;background:#1e1e1e"></div>
<div class="a" style="left:808.0px;top:125px;width:1px;height:17px;background:#1e1e1e"></div>
<div class="a" style="left:834.7px;top:125px;width:1px;height:17px;background:#1e1e1e"></div>
<div class="a" style="left:861.3px;top:125px;width:1px;height:17px;background:#1e1e1e"></div>
<div class="a" style="left:888.0px;top:125px;width:1px;height:17px;background:#1e1e1e"></div>
<div class="a" style="left:914.7px;top:125px;width:1px;height:17px;background:#1e1e1e"></div>
<div class="a" style="left:941.3px;top:125px;width:1px;height:17px;background:#1e1e1e"></div>
<div class="a" style="left:968.0px;top:125px;width:1px;height:17px;background:#1e1e1e"></div>
<div class="a" style="left:809.0px;top:125px;width:25.7px;height:16px;background:#333"></div>
<div class="a" style="left:942.3px;top:125px;width:25.7px;height:16px;background:#333"></div>
<div class="a" style="left:0;top:142px;width:168px;height:16px;background:#4a3420"></div>
<div class="a" style="left:0;top:157px;width:168px;height:1px;background:#1f1f1f"></div>
<svg style="left:20px;top:146px" width="8" height="8" viewBox="0 0 8 8"><path d="M0.5 0.5 H7.5 V5 L5 7.5 H0.5Z" fill="none" stroke="#c8c8c8" stroke-width="1"/><path d="M7.5 5 H5 V7.5" fill="none" stroke="#c8c8c8" stroke-width="1"/><rect x="0" y="0" width="3" height="8" fill="#c8c8c8"/></svg>
<div class="t" style="left:32.5px;top:146.5px;font-size:7.5px;color:#dcdcdc;letter-spacing:-0.2px">head</div>
<div class="a" style="left:100px;top:148px;width:3.5px;height:3.5px;background:#e89050;border-radius:50%"></div>
<div class="a" style="left:114.5px;top:146px;width:5px;height:8px;background:#f0901c"></div>
<svg style="left:146.5px;top:145px" width="9" height="11" viewBox="0 0 9 11"><path d="M2 4.5 V3 Q2 0.5 4.5 0.5 Q7 0.5 7 3 V4.5" fill="none" stroke="#d8d8d8" stroke-width="1.2"/><rect x="0.5" y="4.5" width="8" height="5.5" fill="#d8d8d8"/><rect x="4" y="6.2" width="1.2" height="2" fill="#282828"/></svg>
<div class="a" style="left:168px;top:142px;width:53.3px;height:16px;background:#a2a2a2"></div>
<div class="a" style="left:221.3px;top:142px;width:373.3px;height:16px;background:#6d98c8"></div>
<div class="a" style="left:594.7px;top:142px;width:106.7px;height:16px;background:#a2a2a2"></div>
<div class="a" style="left:701.3px;top:142px;width:286.7px;height:16px;background:#262626"></div>
<div class="a" style="left:168px;top:157px;width:53.3px;height:1px;background:#7a7a7a"></div>
<div class="a" style="left:221.3px;top:157px;width:373.3px;height:1px;background:#4a6e98"></div>
<div class="a" style="left:594.7px;top:157px;width:106.7px;height:1px;background:#7a7a7a"></div>
<div class="a" style="left:701.3px;top:157px;width:286.7px;height:1px;background:#1e1e1e"></div>
<div class="a" style="left:179.3px;top:151.5px;width:4px;height:4px;border-radius:50%;background:#111"></div>
<div class="a" style="left:218.3px;top:149.5px;width:1.2px;height:7px;background:#111"></div>
<div class="a" style="left:233.2px;top:150.5px;width:1.2px;height:4px;background:#2a4a78"></div>
<div class="a" style="left:235.5px;top:150.5px;width:1.2px;height:4px;background:#2a4a78"></div>
<div class="a" style="left:271.7px;top:149.5px;width:1.2px;height:7px;background:#2a4a78"></div>
<div class="a" style="left:221.3px;top:142px;width:1px;height:16px;background:#3a5c88"></div>
<div class="a" style="left:286.0px;top:151.5px;width:4px;height:4px;border-radius:50%;background:#2a4a78"></div>
<div class="a" style="left:325.0px;top:149.5px;width:1.2px;height:7px;background:#2a4a78"></div>
<div class="a" style="left:274.7px;top:142px;width:1px;height:16px;background:#3a5c88"></div>
<div class="a" style="left:339.3px;top:151.5px;width:4px;height:4px;border-radius:50%;background:#2a4a78"></div>
<div class="a" style="left:378.3px;top:149.5px;width:1.2px;height:7px;background:#2a4a78"></div>
<div class="a" style="left:328.0px;top:142px;width:1px;height:16px;background:#3a5c88"></div>
<div class="a" style="left:392.7px;top:151.5px;width:4px;height:4px;border-radius:50%;background:#2a4a78"></div>
<div class="a" style="left:431.7px;top:149.5px;width:1.2px;height:7px;background:#2a4a78"></div>
<div class="a" style="left:381.3px;top:142px;width:1px;height:16px;background:#3a5c88"></div>
<div class="a" style="left:446.0px;top:151.5px;width:4px;height:4px;border-radius:50%;background:#2a4a78"></div>
<div class="a" style="left:485.0px;top:149.5px;width:1.2px;height:7px;background:#2a4a78"></div>
<div class="a" style="left:434.7px;top:142px;width:1px;height:16px;background:#3a5c88"></div>
<div class="a" style="left:499.3px;top:151.5px;width:4px;height:4px;border-radius:50%;background:#2a4a78"></div>
<div class="a" style="left:538.3px;top:149.5px;width:1.2px;height:7px;background:#2a4a78"></div>
<div class="a" style="left:488.0px;top:142px;width:1px;height:16px;background:#3a5c88"></div>
<div class="a" style="left:552.7px;top:151.5px;width:4px;height:4px;border-radius:50%;background:#2a4a78"></div>
<div class="a" style="left:591.7px;top:149.5px;width:1.2px;height:7px;background:#2a4a78"></div>
<div class="a" style="left:541.3px;top:142px;width:1px;height:16px;background:#3a5c88"></div>
<div class="a" style="left:594.7px;top:142px;width:1px;height:16px;background:#3a5c88"></div>
<div class="a" style="left:698.0px;top:149.5px;width:1.2px;height:7px;background:#111"></div>
<div class="a" style="left:701.3px;top:142px;width:1px;height:16px;background:#1e1e1e"></div>
<div class="a" style="left:728.0px;top:142px;width:1px;height:16px;background:#1e1e1e"></div>
<div class="a" style="left:754.7px;top:142px;width:1px;height:16px;background:#1e1e1e"></div>
<div class="a" style="left:781.3px;top:142px;width:1px;height:16px;background:#1e1e1e"></div>
<div class="a" style="left:808.0px;top:142px;width:1px;height:16px;background:#1e1e1e"></div>
<div class="a" style="left:834.7px;top:142px;width:1px;height:16px;background:#1e1e1e"></div>
<div class="a" style="left:861.3px;top:142px;width:1px;height:16px;background:#1e1e1e"></div>
<div class="a" style="left:888.0px;top:142px;width:1px;height:16px;background:#1e1e1e"></div>
<div class="a" style="left:914.7px;top:142px;width:1px;height:16px;background:#1e1e1e"></div>
<div class="a" style="left:941.3px;top:142px;width:1px;height:16px;background:#1e1e1e"></div>
<div class="a" style="left:968.0px;top:142px;width:1px;height:16px;background:#1e1e1e"></div>
<div class="a" style="left:809.0px;top:142px;width:25.7px;height:15px;background:#333"></div>
<div class="a" style="left:942.3px;top:142px;width:25.7px;height:15px;background:#333"></div>
<div class="a" style="left:0;top:156.5px;width:168px;height:1.5px;background:#e07a20"></div>
<div class="a" style="left:0;top:158px;width:168px;height:13px;background:#262626"></div>
<div class="a" style="left:0;top:170px;width:168px;height:1px;background:#1f1f1f"></div>
<svg style="left:20px;top:162px" width="8" height="8" viewBox="0 0 8 8"><path d="M0.5 0.5 H7.5 V5 L5 7.5 H0.5Z" fill="none" stroke="#c8c8c8" stroke-width="1"/><path d="M7.5 5 H5 V7.5" fill="none" stroke="#c8c8c8" stroke-width="1"/><rect x="0" y="0" width="3" height="8" fill="#c8c8c8"/></svg>
<div class="t" style="left:32.5px;top:162.5px;font-size:7.5px;color:#dcdcdc;letter-spacing:-0.2px">Layer_5</div>
<div class="a" style="left:114.5px;top:162px;width:5px;height:8px;background:#18a0a0"></div>
<svg style="left:146.5px;top:161px" width="9" height="11" viewBox="0 0 9 11"><path d="M2 4.5 V3 Q2 0.5 4.5 0.5 Q7 0.5 7 3 V4.5" fill="none" stroke="#d8d8d8" stroke-width="1.2"/><rect x="0.5" y="4.5" width="8" height="5.5" fill="#d8d8d8"/><rect x="4" y="6.2" width="1.2" height="2" fill="#282828"/></svg>
<div class="a" style="left:168px;top:158px;width:53.3px;height:13px;background:#a2a2a2"></div>
<div class="a" style="left:221.3px;top:158px;width:373.3px;height:13px;background:#6d98c8"></div>
<div class="a" style="left:594.7px;top:158px;width:106.7px;height:13px;background:#a2a2a2"></div>
<div class="a" style="left:701.3px;top:158px;width:286.7px;height:13px;background:#262626"></div>
<div class="a" style="left:168px;top:170px;width:53.3px;height:1px;background:#7a7a7a"></div>
<div class="a" style="left:221.3px;top:170px;width:373.3px;height:1px;background:#4a6e98"></div>
<div class="a" style="left:594.7px;top:170px;width:106.7px;height:1px;background:#7a7a7a"></div>
<div class="a" style="left:701.3px;top:170px;width:286.7px;height:1px;background:#1e1e1e"></div>
<div class="a" style="left:179.3px;top:164.5px;width:4px;height:4px;border-radius:50%;background:#111"></div>
<div class="a" style="left:218.3px;top:162.5px;width:1.2px;height:7px;background:#111"></div>
<div class="a" style="left:233.2px;top:163.5px;width:1.2px;height:4px;background:#2a4a78"></div>
<div class="a" style="left:235.5px;top:163.5px;width:1.2px;height:4px;background:#2a4a78"></div>
<div class="a" style="left:271.7px;top:162.5px;width:1.2px;height:7px;background:#2a4a78"></div>
<div class="a" style="left:221.3px;top:158px;width:1px;height:13px;background:#3a5c88"></div>
<div class="a" style="left:286.0px;top:164.5px;width:4px;height:4px;border-radius:50%;background:#2a4a78"></div>
<div class="a" style="left:325.0px;top:162.5px;width:1.2px;height:7px;background:#2a4a78"></div>
<div class="a" style="left:274.7px;top:158px;width:1px;height:13px;background:#3a5c88"></div>
<div class="a" style="left:339.3px;top:164.5px;width:4px;height:4px;border-radius:50%;background:#2a4a78"></div>
<div class="a" style="left:378.3px;top:162.5px;width:1.2px;height:7px;background:#2a4a78"></div>
<div class="a" style="left:328.0px;top:158px;width:1px;height:13px;background:#3a5c88"></div>
<div class="a" style="left:392.7px;top:164.5px;width:4px;height:4px;border-radius:50%;background:#2a4a78"></div>
<div class="a" style="left:431.7px;top:162.5px;width:1.2px;height:7px;background:#2a4a78"></div>
<div class="a" style="left:381.3px;top:158px;width:1px;height:13px;background:#3a5c88"></div>
<div class="a" style="left:446.0px;top:164.5px;width:4px;height:4px;border-radius:50%;background:#2a4a78"></div>
<div class="a" style="left:485.0px;top:162.5px;width:1.2px;height:7px;background:#2a4a78"></div>
<div class="a" style="left:434.7px;top:158px;width:1px;height:13px;background:#3a5c88"></div>
<div class="a" style="left:499.3px;top:164.5px;width:4px;height:4px;border-radius:50%;background:#2a4a78"></div>
<div class="a" style="left:538.3px;top:162.5px;width:1.2px;height:7px;background:#2a4a78"></div>
<div class="a" style="left:488.0px;top:158px;width:1px;height:13px;background:#3a5c88"></div>
<div class="a" style="left:552.7px;top:164.5px;width:4px;height:4px;border-radius:50%;background:#2a4a78"></div>
<div class="a" style="left:591.7px;top:162.5px;width:1.2px;height:7px;background:#2a4a78"></div>
<div class="a" style="left:541.3px;top:158px;width:1px;height:13px;background:#3a5c88"></div>
<div class="a" style="left:594.7px;top:158px;width:1px;height:13px;background:#3a5c88"></div>
<div class="a" style="left:698.0px;top:162.5px;width:1.2px;height:7px;background:#111"></div>
<div class="a" style="left:701.3px;top:158px;width:1px;height:13px;background:#1e1e1e"></div>
<div class="a" style="left:728.0px;top:158px;width:1px;height:13px;background:#1e1e1e"></div>
<div class="a" style="left:754.7px;top:158px;width:1px;height:13px;background:#1e1e1e"></div>
<div class="a" style="left:781.3px;top:158px;width:1px;height:13px;background:#1e1e1e"></div>
<div class="a" style="left:808.0px;top:158px;width:1px;height:13px;background:#1e1e1e"></div>
<div class="a" style="left:834.7px;top:158px;width:1px;height:13px;background:#1e1e1e"></div>
<div class="a" style="left:861.3px;top:158px;width:1px;height:13px;background:#1e1e1e"></div>
<div class="a" style="left:888.0px;top:158px;width:1px;height:13px;background:#1e1e1e"></div>
<div class="a" style="left:914.7px;top:158px;width:1px;height:13px;background:#1e1e1e"></div>
<div class="a" style="left:941.3px;top:158px;width:1px;height:13px;background:#1e1e1e"></div>
<div class="a" style="left:968.0px;top:158px;width:1px;height:13px;background:#1e1e1e"></div>
<div class="a" style="left:809.0px;top:158px;width:25.7px;height:12px;background:#333"></div>
<div class="a" style="left:942.3px;top:158px;width:25.7px;height:12px;background:#333"></div>
<div class="a" style="left:168px;top:89.5px;width:533.3px;height:2px;background:#8a56c8"></div>
<div class="a" style="left:701.3px;top:89.79999999999995px;width:286.7px;height:1px;background:#4a3a62"></div>
<div class="a" style="left:168px;top:156.5px;width:53.3px;height:1.5px;background:#e07a20"></div>
<div class="a" style="left:221.3px;top:156.5px;width:373.3px;height:1.5px;background:#8a8a8a"></div>
<div class="a" style="left:594.7px;top:156.5px;width:106.7px;height:1.5px;background:#e07a20"></div>
<div class="a" style="left:701.3px;top:156.5px;width:286.7px;height:1.5px;background:#7a4a20"></div>
<div class="a" style="left:230px;top:47px;width:9px;height:22px;background:#4a90e0;border-radius:1px 1px 0 0"></div>
<svg style="left:230px;top:69px" width="9" height="4" viewBox="0 0 9 4"><path d="M0 0 H9 L4.5 4Z" fill="#4a90e0"/></svg>
<div class="a" style="left:234px;top:74px;width:1px;height:97px;background:#8ab4e0;opacity:0.25"></div>
<div class="a" style="left:0;top:171px;width:997px;height:11px;background:#282828"></div>
<div class="a" style="left:169px;top:175.5px;width:45px;height:2px;background:#5a5a5a;border-radius:1px"></div>
<div class="a" style="left:988px;top:74px;width:9px;height:101px;background:#282828"></div>
<div class="a" style="left:992px;top:76px;width:2.5px;height:71px;background:#8a8a8a;border-radius:1px"></div>
<svg style="left:224px;top:78px" width="8" height="13" viewBox="0 0 8 13"><path d="M0.5 0.5 L0.5 10.5 L3 8.5 L4.8 12.2 L6.2 11.5 L4.5 8 L7.5 7.8Z" fill="#fff" stroke="#111" stroke-width="0.9"/></svg>
</div><div id="props" class="a">
<div class="a" style="left:0;top:0;width:2px;height:661px;background:#1f1f1f"></div>
<div class="a" style="left:200px;top:0;width:4px;height:661px;background:#232323"></div>
<div class="a" style="left:2px;top:0;width:198px;height:20px;background:#222"></div>
<div class="a" style="left:30px;top:6px;width:42px;height:14px;background:#272727"></div>
<svg style="left:194px;top:3px" width="6" height="4" viewBox="0 0 6 4"><path d="M0.5 0.5 L2 2 L0.5 3.5 M3.5 0.5 L5 2 L3.5 3.5" fill="none" stroke="#cfcfcf" stroke-width="0.9"/></svg>
<svg style="left:193px;top:11px" width="8" height="6" viewBox="0 0 8 6"><path d="M0 0.5 H8 M0 3 H8 M0 5.5 H8" stroke="#9a9a9a" stroke-width="1"/></svg>
<div class="t" style="left:6px;top:10.6px;font-size:6.5px;color:#6c6c6c;font-weight:400;letter-spacing:-0.2px">Assets</div>
<div class="t" style="left:35.5px;top:10.3px;font-size:7px;color:#eeeeee;font-weight:700;letter-spacing:-0.27px">Properties</div>
<div class="t" style="left:76.5px;top:10.6px;font-size:6.5px;color:#6c6c6c;font-weight:400;letter-spacing:-0.2px">Color</div>
<div class="t" style="left:105.5px;top:10.6px;font-size:6.5px;color:#6c6c6c;font-weight:400;letter-spacing:-0.2px">Align</div>
<div class="t" style="left:132.5px;top:10.6px;font-size:6.5px;color:#6c6c6c;font-weight:400;letter-spacing:-0.2px">Library</div>
<div class="a" style="left:2px;top:20px;width:198px;height:33px;background:#262626"></div>
<div class="a" style="left:52px;top:29px;width:1px;height:18px;background:#303030"></div>
<div class="a" style="left:101.5px;top:29px;width:1px;height:18px;background:#303030"></div>
<div class="a" style="left:150px;top:27.5px;width:48px;height:20.5px;background:#3a3a3a;border-radius:3px"></div>
<div class="t" style="left:20.5px;top:34.2px;font-size:8.5px;color:#606060;font-weight:400;letter-spacing:-0.2px">Tool</div>
<div class="t" style="left:65px;top:34.2px;font-size:8.5px;color:#606060;font-weight:400;letter-spacing:-0.2px">Object</div>
<div class="t" style="left:113.5px;top:34.2px;font-size:8.5px;color:#606060;font-weight:400;letter-spacing:-0.2px">Frame</div>
<div class="t" style="left:167.5px;top:34.2px;font-size:8.5px;color:#eeeeee;font-weight:400;letter-spacing:-0.2px">Doc</div>
<div class="a" style="left:2px;top:52.5px;width:198px;height:2px;background:#1e1e1e"></div>
<svg style="left:18.5px;top:64px" width="12" height="11" viewBox="0 0 12 11"><rect x="0.5" y="0.5" width="11" height="10" fill="none" stroke="#bdbdbd" stroke-width="1"/><text x="2" y="8.5" font-size="6.5" font-family="Liberation Sans" font-weight="bold" fill="#bdbdbd">An</text></svg>
<div class="t" style="left:49.5px;top:66.1px;font-size:8.5px;color:#7e7e7e;font-weight:400;letter-spacing:0.2px">robowalk.fla</div>
<div class="t" style="left:49.5px;top:89.1px;font-size:8.5px;color:#7e7e7e;font-weight:400;letter-spacing:0.2px">Document</div>
<div class="a" style="left:2px;top:106px;width:198px;height:2px;background:#1e1e1e"></div>
<div class="a" style="left:14.5px;top:113px;width:20px;height:21px;background:#222;border:1px solid #2e2e2e"></div>
<div class="a" style="left:46.5px;top:113px;width:20px;height:21px;background:#222;border:1px solid #2e2e2e"></div>
<div class="a" style="left:76px;top:113px;width:20px;height:21px;background:#222;border:1px solid #2e2e2e"></div>
<div class="a" style="left:106px;top:113px;width:20px;height:21px;background:#222;border:1px solid #2e2e2e"></div>
<svg style="left:20.5px;top:118px" width="10" height="10" viewBox="0 0 10 10"><path d="M1.5 9.5 V5 Q1.5 1 5 1 Q8.5 1 8.5 5 V9.5" fill="none" stroke="#d8d8d8" stroke-width="2.2"/></svg>
<svg style="left:51px;top:117.5px" width="12" height="11" viewBox="0 0 12 11"><path d="M3 0 V10 M0.5 2.5 H5.5" stroke="#cfcfcf" stroke-width="1"/><path d="M11 4.5 H6.5 V7 H10.5 V10 H6" fill="none" stroke="#cfcfcf" stroke-width="1"/></svg>
<svg style="left:81px;top:118px" width="10" height="10" viewBox="0 0 10 10"><path d="M1.5 10 V1.5 H10" fill="none" stroke="#d8d8d8" stroke-width="2.4"/><path d="M4 3.2 H10" stroke="#9a9a9a" stroke-width="1" stroke-dasharray="1 1"/></svg>
<svg style="left:111.5px;top:117.5px" width="9" height="11" viewBox="0 0 9 11"><path d="M2 4.5 V3 Q2 0.5 4.5 0.5 Q7 0.5 7 3 V4.5" fill="none" stroke="#dcdcdc" stroke-width="1.2"/><rect x="0.5" y="4.5" width="8" height="6" fill="#dcdcdc"/><rect x="4" y="6.5" width="1.2" height="2" fill="#222"/></svg>
<div class="a" style="left:2px;top:138px;width:198px;height:2px;background:#1e1e1e"></div>
<svg style="left:13.5px;top:151.5px" width="7" height="5" viewBox="0 0 7 5"><path d="M0.8 0.8 L3.5 3.8 L6.2 0.8" fill="none" stroke="#d8d8d8" stroke-width="1.5"/></svg>
<div class="t" style="left:28px;top:149.7px;font-size:8.5px;color:#c0c0c0;font-weight:700;letter-spacing:0px">Publish Settings</div>
<div class="t" style="left:14.5px;top:179.1px;font-size:7px;color:#6e6e6e;font-weight:400;letter-spacing:-0.2px">Profile</div>
<div class="a" style="left:44px;top:172.5px;width:145px;height:19.5px;background:#1f1f1f;border:1px solid #363636;border-radius:2px"></div>
<div class="t" style="left:51.5px;top:178.2px;font-size:9px;color:#e6e6e6;font-weight:400;letter-spacing:0.2px">Default</div>
<svg style="left:174.5px;top:180.5px" width="7" height="5" viewBox="0 0 7 5"><path d="M0.8 0.8 L3.5 3.8 L6.2 0.8" fill="none" stroke="#d8d8d8" stroke-width="1.5"/></svg>
<div class="a" style="left:14.5px;top:204.5px;width:174.5px;height:19.5px;background:#1f1f1f;border:1px solid #363636;border-radius:2px"></div>
<div class="t" style="left:76.5px;top:210.2px;font-size:8.5px;color:#d6d6d6;font-weight:400;letter-spacing:0.1px">More settings</div>
<div class="a" style="left:2px;top:235.5px;width:198px;height:2px;background:#1e1e1e"></div>
<svg style="left:13.5px;top:248.5px" width="7" height="5" viewBox="0 0 7 5"><path d="M0.8 0.8 L3.5 3.8 L6.2 0.8" fill="none" stroke="#d8d8d8" stroke-width="1.5"/></svg>
<div class="t" style="left:28.5px;top:246.9px;font-size:8.5px;color:#c0c0c0;font-weight:700;letter-spacing:0px">Document Settings</div>
<div class="t" style="left:14.5px;top:276.6px;font-size:7px;color:#6a6a6a;font-weight:400;letter-spacing:-0.2px">W</div>
<div class="t" style="left:29.5px;top:275.9px;font-size:8.5px;color:#e2e2e2;font-weight:400;letter-spacing:-0.3px">1920</div>
<div class="a" style="left:28.5px;top:290px;width:30px;height:1px;background:#3a3a3a"></div>
<div class="t" style="left:14.5px;top:308.6px;font-size:7px;color:#6a6a6a;font-weight:400;letter-spacing:-0.2px">H</div>
<div class="t" style="left:28.5px;top:307.9px;font-size:8.5px;color:#e2e2e2;font-weight:400;letter-spacing:-0.3px">1080</div>
<div class="a" style="left:28.5px;top:321.5px;width:30px;height:1px;background:#3a3a3a"></div>
<svg style="left:59.5px;top:280.5px" width="8" height="31" viewBox="0 0 8 31"><path d="M0 0.5 H6.5 V11 M6.5 20 V30.5 H0" fill="none" stroke="#5a5a5a" stroke-width="1"/><path d="M4.5 14 V13 Q4.5 11 6.5 11 Q8.5 11 8.5 13" fill="none" stroke="#7a7a7a" stroke-width="1"/><rect x="3.5" y="14" width="6.5" height="5.5" fill="#7a7a7a"/></svg>
<div class="a" style="left:92.5px;top:271px;width:97.0px;height:20.0px;background:#1f1f1f;border:1px solid #363636;border-radius:2px"></div>
<div class="t" style="left:111.5px;top:276.9px;font-size:8.5px;color:#d6d6d6;font-weight:400;letter-spacing:0.1px">Match contents</div>
<div class="a" style="left:92.5px;top:308.7px;width:9.5px;height:9.5px;border:1px solid #bdbdbd;border-radius:1px"></div>
<div class="t" style="left:109px;top:309.4px;font-size:8.5px;color:#d6d6d6;font-weight:400;letter-spacing:0.05px">Scale Content</div>
<div class="t" style="left:14.5px;top:332.9px;font-size:7px;color:#6a6a6a;font-weight:400;letter-spacing:-0.2px">Stage</div>
<div class="a" style="left:47px;top:327.5px;width:32px;height:16px;background:#fff;border-radius:2px"></div>
<div class="a" style="left:92.5px;top:332.7px;width:9.5px;height:9.5px;border:1px solid #bdbdbd;border-radius:1px"></div>
<div class="t" style="left:109px;top:333.4px;font-size:8.5px;color:#d6d6d6;font-weight:400;letter-spacing:0.05px">Apply to pasteboard</div>
<div class="t" style="left:14.5px;top:356.6px;font-size:7px;color:#6a6a6a;font-weight:400;letter-spacing:-0.2px">FPS</div>
<div class="t" style="left:47px;top:355.9px;font-size:8.5px;color:#e2e2e2;font-weight:400;letter-spacing:-0.3px">24</div>
<div class="a" style="left:47px;top:370px;width:29px;height:1px;background:#3a3a3a"></div>
<div class="a" style="left:92.5px;top:356.7px;width:9.5px;height:9.5px;border:1px solid #bdbdbd;border-radius:1px"></div>
<div class="t" style="left:109px;top:357.4px;font-size:8.5px;color:#d6d6d6;font-weight:400;letter-spacing:0.05px">Scale Spans</div>
<div class="a" style="left:14.5px;top:381.5px;width:174.5px;height:21.0px;background:#1f1f1f;border:1px solid #363636;border-radius:2px"></div>
<div class="t" style="left:76.5px;top:387.9px;font-size:8.5px;color:#d6d6d6;font-weight:400;letter-spacing:0.1px">More settings</div>
<div class="a" style="left:2px;top:411.5px;width:198px;height:2px;background:#1e1e1e"></div>
<svg style="left:13.5px;top:426px" width="7" height="5" viewBox="0 0 7 5"><path d="M0.8 0.8 L3.5 3.8 L6.2 0.8" fill="none" stroke="#d8d8d8" stroke-width="1.5"/></svg>
<div class="t" style="left:28px;top:424.4px;font-size:8.5px;color:#c0c0c0;font-weight:700;letter-spacing:-0.05px">SWF History</div>
<div class="t" style="left:14.5px;top:450.2px;font-size:8.5px;color:#6e6e6e;font-weight:400;letter-spacing:0px">No logs available</div>
<div class="a" style="left:2px;top:471px;width:198px;height:2px;background:#1e1e1e"></div>
<svg style="left:14.5px;top:483px" width="5" height="7" viewBox="0 0 5 7"><path d="M0.8 0.8 L3.8 3.5 L0.8 6.2" fill="none" stroke="#d8d8d8" stroke-width="1.5"/></svg>
<div class="t" style="left:28px;top:481.9px;font-size:8.5px;color:#c0c0c0;font-weight:700;letter-spacing:-0.06px">Accessibility</div>
<div class="a" style="left:182.5px;top:478.5px;width:19px;height:10px;background:#c8c8c8;border-radius:5px"></div>
<div class="a" style="left:193px;top:480px;width:7px;height:7px;background:#262626;border-radius:50%"></div>
<div class="a" style="left:2px;top:498.5px;width:198px;height:2px;background:#1e1e1e"></div>
</div><div id="taskbar" class="a" style="background:linear-gradient(90deg,#0d1a19 0%,#131812 25%,#1b150f 40%,#15120f 50%,#101410 65%,#0f1518 85%,#111826 100%)">
  <div class="a" style="left:15px;top:10px;width:13.5px;height:13.5px;border-radius:50%;background:radial-gradient(circle at 45% 40%,#ffb040,#f07a10)"></div>
  <div class="t" style="left:34.5px;top:9px;font-size:7px;font-weight:bold;color:#f0f0f0;letter-spacing:-0.2px">64°F</div>
  <div class="t" style="left:34.5px;top:19px;font-size:7.5px;color:#e6e6e6;letter-spacing:-0.1px">Sunny</div>
  <!-- windows -->
  <svg style="left:391px;top:9px" width="16" height="16" viewBox="0 0 16 16"><rect x="0" y="0" width="7.5" height="7.5" fill="#52c4fb"/><rect x="8.5" y="0" width="7.5" height="7.5" fill="#52c4fb"/><rect x="0" y="8.5" width="7.5" height="7.5" fill="#3ab0f0"/><rect x="8.5" y="8.5" width="7.5" height="7.5" fill="#3ab0f0"/></svg>
  <div class="a" style="left:417.5px;top:6px;width:65px;height:21.5px;border-radius:11px;background:#2a241d"></div>
  <svg style="left:432px;top:12px" width="9" height="10" viewBox="0 0 9 10"><circle cx="5.2" cy="3.8" r="3" fill="none" stroke="#e8e8e8" stroke-width="1.2"/><path d="M3 6 L0.7 9" stroke="#e8e8e8" stroke-width="1.3"/></svg>
  <div class="t" style="left:445px;top:13px;font-size:8.5px;color:#e8e8e8;letter-spacing:-0.1px">Search</div>
  <!-- task view -->
  <svg style="left:492px;top:9px" width="16" height="15" viewBox="0 0 16 15"><rect x="0" y="5" width="10" height="10" fill="#6a6a6a"/><rect x="5" y="0" width="11" height="10" fill="#e6e6e6"/><rect x="3" y="3" width="8" height="8" fill="#a8a8a8"/></svg>
  <!-- teams -->
  <div class="a" style="left:521px;top:9px;width:16.5px;height:16px;border-radius:50%;background:linear-gradient(135deg,#a88af0,#6a4ac8)"></div>
  <div class="a" style="left:525.5px;top:14.5px;width:6px;height:5px;background:#f0eaff;border-radius:1px"></div>
  <div class="a" style="left:531px;top:15px;width:2.5px;height:4px;background:#f0eaff"></div>
  <!-- edge -->
  <div class="a" style="left:550px;top:9px;width:17px;height:17px;border-radius:50%;background:conic-gradient(from 200deg,#1a7fd8,#0c5bb8,#2fc0a0,#60d060,#2a9ad8,#1a7fd8)"></div>
  <div class="a" style="left:555px;top:15px;width:9px;height:6px;border-radius:50%;background:#0a3a78"></div>
  <!-- explorer -->
  <svg style="left:580px;top:9px" width="17" height="15" viewBox="0 0 17 15"><path d="M0 1 H6 L7.5 3 H17 V14 H0Z" fill="#f4c430"/><rect x="0" y="4" width="17" height="6" fill="#ffd65a"/><rect x="3" y="10" width="11" height="5" fill="#1f78d0"/></svg>
  <div class="a" style="left:586px;top:28px;width:4px;height:1.5px;background:#9a9a9a;border-radius:1px"></div>
  <!-- store -->
  <svg style="left:609px;top:8px" width="16" height="17" viewBox="0 0 16 17"><rect x="0" y="3" width="16" height="14" rx="2" fill="#f0f0f0"/><path d="M4.5 3 Q4.5 0.5 8 0.5 Q11.5 0.5 11.5 3" fill="none" stroke="#3aa0e8" stroke-width="1.2"/><rect x="4" y="7" width="3.5" height="3.5" fill="#f25022"/><rect x="8.5" y="7" width="3.5" height="3.5" fill="#7fba00"/><rect x="4" y="11" width="3.5" height="3.5" fill="#00a4ef"/><rect x="8.5" y="11" width="3.5" height="3.5" fill="#ffb900"/></svg>
  <!-- mail -->
  <svg style="left:638.5px;top:10px" width="16.5" height="14" viewBox="0 0 16.5 14"><rect x="0" y="0" width="16.5" height="14" rx="1" fill="#2a9be8"/><path d="M0 1 L8.25 8 L16.5 1" fill="none" stroke="#bfe6ff" stroke-width="1.2"/><path d="M0 0 L8.25 7 L16.5 0Z" fill="#6cc4f8"/></svg>
  <!-- gift -->
  <svg style="left:667.5px;top:9px" width="17" height="16" viewBox="0 0 17 16"><rect x="0" y="0" width="17" height="16" rx="2" fill="#f2f2f2"/><rect x="3" y="5" width="11" height="9" fill="#b42020"/><rect x="2.5" y="4" width="12" height="3" fill="#c82828"/><rect x="7.8" y="4" width="1.4" height="10" fill="#f2f2f2"/><path d="M8.5 4 Q5 0.5 4.5 3 M8.5 4 Q12 0.5 12.5 3" fill="none" stroke="#c82828" stroke-width="1.2"/></svg>
  <!-- clipchamp-ish -->
  <svg style="left:698px;top:9px" width="15" height="16" viewBox="0 0 15 16"><path d="M7.5 0 L15 4 V12 L7.5 16 L0 12 V4Z" fill="#5a4ad8"/><path d="M7.5 0 L15 4 V12 L7.5 16Z" fill="#2f7ae0"/><path d="M5.5 5 L10.5 8 L5.5 11Z" fill="#e8e8ff"/></svg>
  <!-- chrome -->
  <div class="a" style="left:726.5px;top:9px;width:16.5px;height:16.5px;border-radius:50%;background:conic-gradient(from -30deg,#e53a2a 0deg 120deg,#ffc828 120deg 240deg,#2e9a48 240deg 360deg)"></div>
  <div class="a" style="left:730.5px;top:13px;width:8.5px;height:8.5px;border-radius:50%;background:#fff"></div>
  <div class="a" style="left:732px;top:14.5px;width:5.5px;height:5.5px;border-radius:50%;background:#2a7ae8"></div>
  <!-- animate -->
  <div class="a" style="left:751px;top:4px;width:27px;height:27px;background:#1e1e1c;border-radius:3px"></div>
  <div class="a" style="left:757px;top:10px;width:15px;height:14.5px;background:#00005b;border-radius:2px"></div>
  <div class="t" style="left:758.5px;top:13px;font-size:8.5px;font-weight:bold;color:#9a9aff;letter-spacing:-0.4px">An</div>
  <div class="a" style="left:759px;top:28px;width:10px;height:2px;background:#5aa0e8;border-radius:1px"></div>
  <!-- W -->
  <div class="a" style="left:785px;top:9px;width:16.5px;height:16.5px;border-radius:50%;background:#f4f4f4"></div>
  <div class="t" style="left:789px;top:13px;font-size:9px;color:#38a8c8">w</div>
  <div class="a" style="left:792px;top:29px;width:4px;height:1.5px;background:#9a9a9a"></div>
  <!-- spotify -->
  <div class="a" style="left:815px;top:9px;width:16.5px;height:16.5px;border-radius:50%;background:#1ed760"></div>
  <svg style="left:818px;top:13px" width="11" height="9" viewBox="0 0 11 9"><path d="M1 2 Q5.5 0 10 2.2 M1.8 4.7 Q5.5 3 9.2 4.9 M2.6 7.2 Q5.5 6 8.4 7.4" fill="none" stroke="#111" stroke-width="1.3" stroke-linecap="round"/></svg>
  <div class="a" style="left:821px;top:29px;width:4px;height:1.5px;background:#9a9a9a"></div>
  <!-- obs -->
  <div class="a" style="left:844px;top:9.5px;width:16px;height:16px;border-radius:50%;border:1.5px solid #d0d0d0;background:#1a1a1a"></div>
  <svg style="left:847px;top:12.5px" width="10" height="10" viewBox="0 0 10 10"><circle cx="5" cy="2.5" r="2" fill="#cfcfcf"/><circle cx="2.5" cy="6.8" r="2" fill="#cfcfcf"/><circle cx="7.5" cy="6.8" r="2" fill="#cfcfcf"/></svg>
  <div class="a" style="left:850px;top:29px;width:4px;height:1.5px;background:#9a9a9a"></div>
  <!-- ps -->
  <div class="a" style="left:874px;top:10px;width:15px;height:14.5px;background:#001834;border-radius:2px"></div>
  <div class="t" style="left:875.5px;top:13.5px;font-size:8px;font-weight:bold;color:#31a8ff;letter-spacing:-0.3px">Ps</div>
  <div class="a" style="left:879px;top:29px;width:4px;height:1.5px;background:#9a9a9a"></div>
  <!-- clock -->
  <div class="t" style="left:1239px;top:7.5px;font-size:7.5px;color:#e8e8e8;letter-spacing:-0.15px">4:23 PM</div>
  <div class="t" style="left:1237px;top:18.5px;font-size:7.5px;color:#e8e8e8;letter-spacing:-0.15px">2/1/2023</div>
</div>
</body></html>
